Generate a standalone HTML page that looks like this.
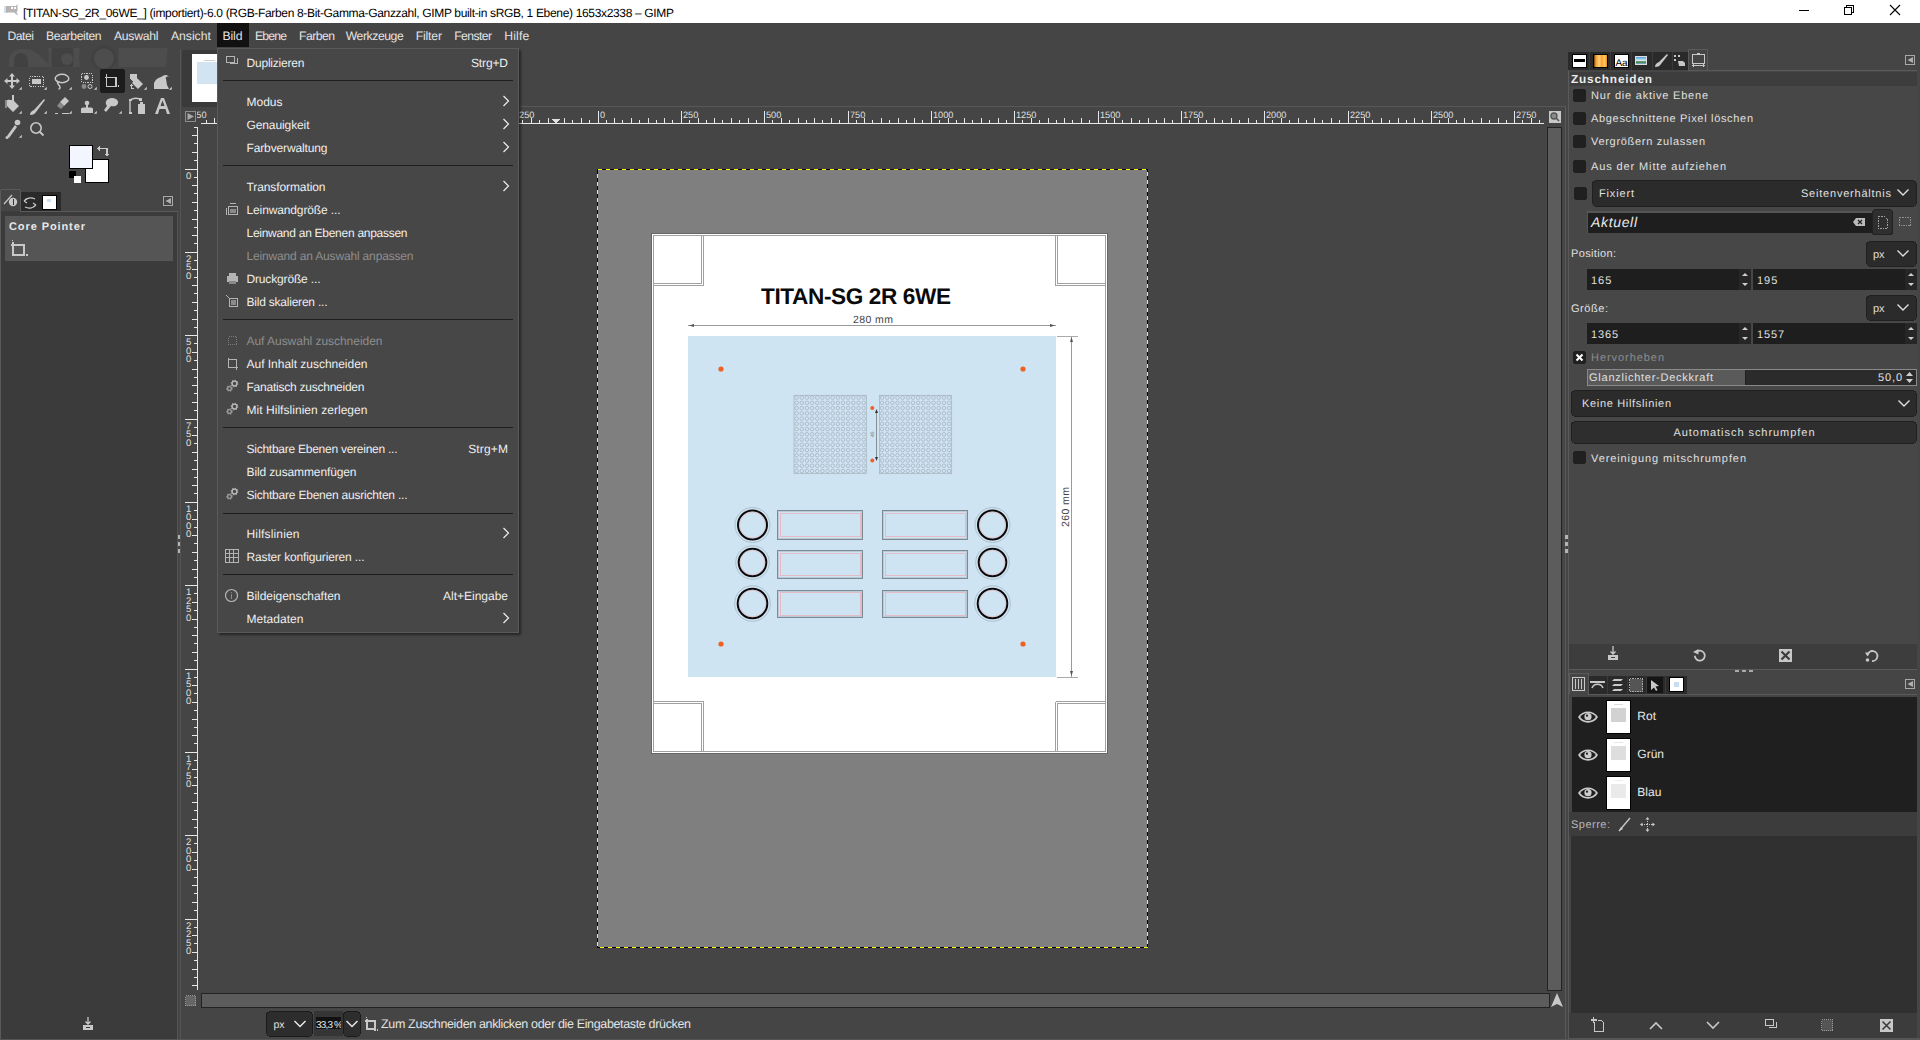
<!DOCTYPE html>
<html><head><meta charset="utf-8"><title>GIMP</title>
<style>
html,body{margin:0;padding:0;width:1920px;height:1040px;overflow:hidden;background:#454545;font-family:"Liberation Sans",sans-serif;}
svg{display:block;position:absolute;left:0;top:0;}
text{white-space:pre;}
</style></head><body>
<svg width="1920" height="1040" viewBox="0 0 1920 1040" shape-rendering="crispEdges" text-rendering="geometricPrecision">
<rect x="0" y="0" width="1920" height="1040" fill="#454545" />
<rect x="0" y="0" width="1920" height="23" fill="#ffffff" />
<rect x="4" y="6" width="4" height="7" fill="#cfe0ee" />
<path d="M6 6 H16 L17.5 4 V11 L16.5 12.5 L18 14.5 L17 15 L14 12.5 H6 Z" fill="#b4b4b4" shape-rendering="geometricPrecision"/>
<rect x="11" y="7" width="2" height="2" fill="#ffffff" />
<rect x="14" y="7" width="2" height="2" fill="#ffffff" />
<rect x="7" y="8" width="3" height="1" fill="#d8a0a0" />
<text x="23" y="17" font-size="12" fill="#000000" font-family="Liberation Sans" textLength="651" lengthAdjust="spacing" >[TITAN-SG_2R_06WE_] (importiert)-6.0 (RGB-Farben 8-Bit-Gamma-Ganzzahl, GIMP built-in sRGB, 1 Ebene) 1653x2338 – GIMP</text>
<line x1="1799" y1="10.5" x2="1809" y2="10.5" stroke="#000" stroke-width="1" />
<rect x="1844.5" y="7.5" width="7" height="7" fill="none" stroke="#000" stroke-width="1"/>
<path d="M1846.5 7.5 V5.5 H1853.5 V12.5 H1851.5" fill="none" stroke="#000" stroke-width="1"/>
<path d="M1890 5 L1900 15 M1900 5 L1890 15" stroke="#000" stroke-width="1.1" shape-rendering="geometricPrecision"/>
<rect x="0" y="23" width="1920" height="24" fill="#454545" />
<rect x="217" y="23" width="32" height="24" fill="#111111" />
<text x="7.4" y="40" font-size="12.2" fill="#e3e3e3" font-family="Liberation Sans" textLength="26.5" lengthAdjust="spacing" >Datei</text>
<text x="46" y="40" font-size="12.2" fill="#e3e3e3" font-family="Liberation Sans" textLength="55.6" lengthAdjust="spacing" >Bearbeiten</text>
<text x="114" y="40" font-size="12.2" fill="#e3e3e3" font-family="Liberation Sans" textLength="44.4" lengthAdjust="spacing" >Auswahl</text>
<text x="171" y="40" font-size="12.2" fill="#e3e3e3" font-family="Liberation Sans" textLength="39.8" lengthAdjust="spacing" >Ansicht</text>
<text x="222.5" y="40" font-size="12.2" fill="#e3e3e3" font-family="Liberation Sans" textLength="20" lengthAdjust="spacing" >Bild</text>
<text x="255" y="40" font-size="12.2" fill="#e3e3e3" font-family="Liberation Sans" textLength="32" lengthAdjust="spacing" >Ebene</text>
<text x="299" y="40" font-size="12.2" fill="#e3e3e3" font-family="Liberation Sans" textLength="36" lengthAdjust="spacing" >Farben</text>
<text x="345.75" y="40" font-size="12.2" fill="#e3e3e3" font-family="Liberation Sans" textLength="58" lengthAdjust="spacing" >Werkzeuge</text>
<text x="415.75" y="40" font-size="12.2" fill="#e3e3e3" font-family="Liberation Sans" textLength="26.25" lengthAdjust="spacing" >Filter</text>
<text x="454.25" y="40" font-size="12.2" fill="#e3e3e3" font-family="Liberation Sans" textLength="37.75" lengthAdjust="spacing" >Fenster</text>
<text x="504.25" y="40" font-size="12.2" fill="#e3e3e3" font-family="Liberation Sans" textLength="25" lengthAdjust="spacing" >Hilfe</text>
<rect x="0" y="47" width="178" height="993" fill="#454545" />
<line x1="0.5" y1="190" x2="0.5" y2="1040" stroke="#5a5a5a" stroke-width="1" />
<rect x="1" y="211" width="176" height="829" fill="#3b3b3b" />
<line x1="177.5" y1="211" x2="177.5" y2="1040" stroke="#555555" stroke-width="1" />
<line x1="180.5" y1="49" x2="180.5" y2="1040" stroke="#555555" stroke-width="1" />
<line x1="181" y1="49.5" x2="232" y2="49.5" stroke="#555555" stroke-width="1" />
<rect x="181" y="49" width="1387" height="991" fill="#454545" />
<rect x="182" y="50" width="50" height="57" fill="#3a3a3a" />
<rect x="192" y="54" width="34" height="48" fill="#ffffff" />
<rect x="197" y="62" width="25" height="22" fill="#d2e4f2" />
<rect x="204" y="60" width="11" height="1" fill="#d0d0d0" />
<rect x="1568" y="47" width="352" height="993" fill="#454545" />
<line x1="1565.5" y1="106" x2="1565.5" y2="1040" stroke="#5a5a5a" stroke-width="1" />
<line x1="1568.5" y1="70" x2="1568.5" y2="1040" stroke="#5a5a5a" stroke-width="1" />
<rect x="198" y="124" width="1349" height="866" fill="#454545" />
<line x1="232" y1="106.5" x2="1565" y2="106.5" stroke="#575757" stroke-width="1" />
<defs><clipPath id="trc"><rect x="197" y="107" width="1347" height="17"/></clipPath></defs>
<g clip-path="url(#trc)">
<line x1="201" y1="123.5" x2="1544" y2="123.5" stroke="#e8e8e8" stroke-width="1" />
<line x1="206.5" y1="120" x2="206.5" y2="123" stroke="#e8e8e8" stroke-width="1" />
<line x1="214.5" y1="118" x2="214.5" y2="123" stroke="#e8e8e8" stroke-width="1" />
<line x1="222.5" y1="120" x2="222.5" y2="123" stroke="#e8e8e8" stroke-width="1" />
<line x1="231.5" y1="118" x2="231.5" y2="123" stroke="#e8e8e8" stroke-width="1" />
<line x1="239.5" y1="120" x2="239.5" y2="123" stroke="#e8e8e8" stroke-width="1" />
<line x1="248.5" y1="118" x2="248.5" y2="123" stroke="#e8e8e8" stroke-width="1" />
<line x1="256.5" y1="120" x2="256.5" y2="123" stroke="#e8e8e8" stroke-width="1" />
<line x1="264.5" y1="111" x2="264.5" y2="123" stroke="#e8e8e8" stroke-width="1" />
<line x1="272.5" y1="120" x2="272.5" y2="123" stroke="#e8e8e8" stroke-width="1" />
<line x1="281.5" y1="118" x2="281.5" y2="123" stroke="#e8e8e8" stroke-width="1" />
<line x1="289.5" y1="120" x2="289.5" y2="123" stroke="#e8e8e8" stroke-width="1" />
<line x1="298.5" y1="118" x2="298.5" y2="123" stroke="#e8e8e8" stroke-width="1" />
<line x1="306.5" y1="120" x2="306.5" y2="123" stroke="#e8e8e8" stroke-width="1" />
<line x1="314.5" y1="118" x2="314.5" y2="123" stroke="#e8e8e8" stroke-width="1" />
<line x1="322.5" y1="120" x2="322.5" y2="123" stroke="#e8e8e8" stroke-width="1" />
<line x1="331.5" y1="118" x2="331.5" y2="123" stroke="#e8e8e8" stroke-width="1" />
<line x1="339.5" y1="120" x2="339.5" y2="123" stroke="#e8e8e8" stroke-width="1" />
<line x1="348.5" y1="111" x2="348.5" y2="123" stroke="#e8e8e8" stroke-width="1" />
<line x1="356.5" y1="120" x2="356.5" y2="123" stroke="#e8e8e8" stroke-width="1" />
<line x1="364.5" y1="118" x2="364.5" y2="123" stroke="#e8e8e8" stroke-width="1" />
<line x1="372.5" y1="120" x2="372.5" y2="123" stroke="#e8e8e8" stroke-width="1" />
<line x1="381.5" y1="118" x2="381.5" y2="123" stroke="#e8e8e8" stroke-width="1" />
<line x1="389.5" y1="120" x2="389.5" y2="123" stroke="#e8e8e8" stroke-width="1" />
<line x1="398.5" y1="118" x2="398.5" y2="123" stroke="#e8e8e8" stroke-width="1" />
<line x1="406.5" y1="120" x2="406.5" y2="123" stroke="#e8e8e8" stroke-width="1" />
<line x1="414.5" y1="118" x2="414.5" y2="123" stroke="#e8e8e8" stroke-width="1" />
<line x1="422.5" y1="120" x2="422.5" y2="123" stroke="#e8e8e8" stroke-width="1" />
<line x1="431.5" y1="111" x2="431.5" y2="123" stroke="#e8e8e8" stroke-width="1" />
<line x1="439.5" y1="120" x2="439.5" y2="123" stroke="#e8e8e8" stroke-width="1" />
<line x1="448.5" y1="118" x2="448.5" y2="123" stroke="#e8e8e8" stroke-width="1" />
<line x1="456.5" y1="120" x2="456.5" y2="123" stroke="#e8e8e8" stroke-width="1" />
<line x1="464.5" y1="118" x2="464.5" y2="123" stroke="#e8e8e8" stroke-width="1" />
<line x1="472.5" y1="120" x2="472.5" y2="123" stroke="#e8e8e8" stroke-width="1" />
<line x1="481.5" y1="118" x2="481.5" y2="123" stroke="#e8e8e8" stroke-width="1" />
<line x1="489.5" y1="120" x2="489.5" y2="123" stroke="#e8e8e8" stroke-width="1" />
<line x1="498.5" y1="118" x2="498.5" y2="123" stroke="#e8e8e8" stroke-width="1" />
<line x1="506.5" y1="120" x2="506.5" y2="123" stroke="#e8e8e8" stroke-width="1" />
<line x1="514.5" y1="111" x2="514.5" y2="123" stroke="#e8e8e8" stroke-width="1" />
<line x1="522.5" y1="120" x2="522.5" y2="123" stroke="#e8e8e8" stroke-width="1" />
<line x1="531.5" y1="118" x2="531.5" y2="123" stroke="#e8e8e8" stroke-width="1" />
<line x1="539.5" y1="120" x2="539.5" y2="123" stroke="#e8e8e8" stroke-width="1" />
<line x1="548.5" y1="118" x2="548.5" y2="123" stroke="#e8e8e8" stroke-width="1" />
<line x1="556.5" y1="120" x2="556.5" y2="123" stroke="#e8e8e8" stroke-width="1" />
<line x1="564.5" y1="118" x2="564.5" y2="123" stroke="#e8e8e8" stroke-width="1" />
<line x1="572.5" y1="120" x2="572.5" y2="123" stroke="#e8e8e8" stroke-width="1" />
<line x1="581.5" y1="118" x2="581.5" y2="123" stroke="#e8e8e8" stroke-width="1" />
<line x1="589.5" y1="120" x2="589.5" y2="123" stroke="#e8e8e8" stroke-width="1" />
<line x1="598.5" y1="111" x2="598.5" y2="123" stroke="#e8e8e8" stroke-width="1" />
<line x1="606.5" y1="120" x2="606.5" y2="123" stroke="#e8e8e8" stroke-width="1" />
<line x1="614.5" y1="118" x2="614.5" y2="123" stroke="#e8e8e8" stroke-width="1" />
<line x1="622.5" y1="120" x2="622.5" y2="123" stroke="#e8e8e8" stroke-width="1" />
<line x1="631.5" y1="118" x2="631.5" y2="123" stroke="#e8e8e8" stroke-width="1" />
<line x1="639.5" y1="120" x2="639.5" y2="123" stroke="#e8e8e8" stroke-width="1" />
<line x1="648.5" y1="118" x2="648.5" y2="123" stroke="#e8e8e8" stroke-width="1" />
<line x1="656.5" y1="120" x2="656.5" y2="123" stroke="#e8e8e8" stroke-width="1" />
<line x1="664.5" y1="118" x2="664.5" y2="123" stroke="#e8e8e8" stroke-width="1" />
<line x1="672.5" y1="120" x2="672.5" y2="123" stroke="#e8e8e8" stroke-width="1" />
<line x1="681.5" y1="111" x2="681.5" y2="123" stroke="#e8e8e8" stroke-width="1" />
<line x1="689.5" y1="120" x2="689.5" y2="123" stroke="#e8e8e8" stroke-width="1" />
<line x1="698.5" y1="118" x2="698.5" y2="123" stroke="#e8e8e8" stroke-width="1" />
<line x1="706.5" y1="120" x2="706.5" y2="123" stroke="#e8e8e8" stroke-width="1" />
<line x1="714.5" y1="118" x2="714.5" y2="123" stroke="#e8e8e8" stroke-width="1" />
<line x1="722.5" y1="120" x2="722.5" y2="123" stroke="#e8e8e8" stroke-width="1" />
<line x1="731.5" y1="118" x2="731.5" y2="123" stroke="#e8e8e8" stroke-width="1" />
<line x1="739.5" y1="120" x2="739.5" y2="123" stroke="#e8e8e8" stroke-width="1" />
<line x1="748.5" y1="118" x2="748.5" y2="123" stroke="#e8e8e8" stroke-width="1" />
<line x1="756.5" y1="120" x2="756.5" y2="123" stroke="#e8e8e8" stroke-width="1" />
<line x1="764.5" y1="111" x2="764.5" y2="123" stroke="#e8e8e8" stroke-width="1" />
<line x1="772.5" y1="120" x2="772.5" y2="123" stroke="#e8e8e8" stroke-width="1" />
<line x1="781.5" y1="118" x2="781.5" y2="123" stroke="#e8e8e8" stroke-width="1" />
<line x1="789.5" y1="120" x2="789.5" y2="123" stroke="#e8e8e8" stroke-width="1" />
<line x1="798.5" y1="118" x2="798.5" y2="123" stroke="#e8e8e8" stroke-width="1" />
<line x1="806.5" y1="120" x2="806.5" y2="123" stroke="#e8e8e8" stroke-width="1" />
<line x1="814.5" y1="118" x2="814.5" y2="123" stroke="#e8e8e8" stroke-width="1" />
<line x1="822.5" y1="120" x2="822.5" y2="123" stroke="#e8e8e8" stroke-width="1" />
<line x1="831.5" y1="118" x2="831.5" y2="123" stroke="#e8e8e8" stroke-width="1" />
<line x1="839.5" y1="120" x2="839.5" y2="123" stroke="#e8e8e8" stroke-width="1" />
<line x1="848.5" y1="111" x2="848.5" y2="123" stroke="#e8e8e8" stroke-width="1" />
<line x1="856.5" y1="120" x2="856.5" y2="123" stroke="#e8e8e8" stroke-width="1" />
<line x1="864.5" y1="118" x2="864.5" y2="123" stroke="#e8e8e8" stroke-width="1" />
<line x1="872.5" y1="120" x2="872.5" y2="123" stroke="#e8e8e8" stroke-width="1" />
<line x1="881.5" y1="118" x2="881.5" y2="123" stroke="#e8e8e8" stroke-width="1" />
<line x1="889.5" y1="120" x2="889.5" y2="123" stroke="#e8e8e8" stroke-width="1" />
<line x1="898.5" y1="118" x2="898.5" y2="123" stroke="#e8e8e8" stroke-width="1" />
<line x1="906.5" y1="120" x2="906.5" y2="123" stroke="#e8e8e8" stroke-width="1" />
<line x1="914.5" y1="118" x2="914.5" y2="123" stroke="#e8e8e8" stroke-width="1" />
<line x1="922.5" y1="120" x2="922.5" y2="123" stroke="#e8e8e8" stroke-width="1" />
<line x1="931.5" y1="111" x2="931.5" y2="123" stroke="#e8e8e8" stroke-width="1" />
<line x1="939.5" y1="120" x2="939.5" y2="123" stroke="#e8e8e8" stroke-width="1" />
<line x1="948.5" y1="118" x2="948.5" y2="123" stroke="#e8e8e8" stroke-width="1" />
<line x1="956.5" y1="120" x2="956.5" y2="123" stroke="#e8e8e8" stroke-width="1" />
<line x1="964.5" y1="118" x2="964.5" y2="123" stroke="#e8e8e8" stroke-width="1" />
<line x1="972.5" y1="120" x2="972.5" y2="123" stroke="#e8e8e8" stroke-width="1" />
<line x1="981.5" y1="118" x2="981.5" y2="123" stroke="#e8e8e8" stroke-width="1" />
<line x1="989.5" y1="120" x2="989.5" y2="123" stroke="#e8e8e8" stroke-width="1" />
<line x1="998.5" y1="118" x2="998.5" y2="123" stroke="#e8e8e8" stroke-width="1" />
<line x1="1006.5" y1="120" x2="1006.5" y2="123" stroke="#e8e8e8" stroke-width="1" />
<line x1="1014.5" y1="111" x2="1014.5" y2="123" stroke="#e8e8e8" stroke-width="1" />
<line x1="1022.5" y1="120" x2="1022.5" y2="123" stroke="#e8e8e8" stroke-width="1" />
<line x1="1031.5" y1="118" x2="1031.5" y2="123" stroke="#e8e8e8" stroke-width="1" />
<line x1="1039.5" y1="120" x2="1039.5" y2="123" stroke="#e8e8e8" stroke-width="1" />
<line x1="1048.5" y1="118" x2="1048.5" y2="123" stroke="#e8e8e8" stroke-width="1" />
<line x1="1056.5" y1="120" x2="1056.5" y2="123" stroke="#e8e8e8" stroke-width="1" />
<line x1="1064.5" y1="118" x2="1064.5" y2="123" stroke="#e8e8e8" stroke-width="1" />
<line x1="1072.5" y1="120" x2="1072.5" y2="123" stroke="#e8e8e8" stroke-width="1" />
<line x1="1081.5" y1="118" x2="1081.5" y2="123" stroke="#e8e8e8" stroke-width="1" />
<line x1="1089.5" y1="120" x2="1089.5" y2="123" stroke="#e8e8e8" stroke-width="1" />
<line x1="1098.5" y1="111" x2="1098.5" y2="123" stroke="#e8e8e8" stroke-width="1" />
<line x1="1106.5" y1="120" x2="1106.5" y2="123" stroke="#e8e8e8" stroke-width="1" />
<line x1="1114.5" y1="118" x2="1114.5" y2="123" stroke="#e8e8e8" stroke-width="1" />
<line x1="1122.5" y1="120" x2="1122.5" y2="123" stroke="#e8e8e8" stroke-width="1" />
<line x1="1131.5" y1="118" x2="1131.5" y2="123" stroke="#e8e8e8" stroke-width="1" />
<line x1="1139.5" y1="120" x2="1139.5" y2="123" stroke="#e8e8e8" stroke-width="1" />
<line x1="1148.5" y1="118" x2="1148.5" y2="123" stroke="#e8e8e8" stroke-width="1" />
<line x1="1156.5" y1="120" x2="1156.5" y2="123" stroke="#e8e8e8" stroke-width="1" />
<line x1="1164.5" y1="118" x2="1164.5" y2="123" stroke="#e8e8e8" stroke-width="1" />
<line x1="1172.5" y1="120" x2="1172.5" y2="123" stroke="#e8e8e8" stroke-width="1" />
<line x1="1181.5" y1="111" x2="1181.5" y2="123" stroke="#e8e8e8" stroke-width="1" />
<line x1="1189.5" y1="120" x2="1189.5" y2="123" stroke="#e8e8e8" stroke-width="1" />
<line x1="1198.5" y1="118" x2="1198.5" y2="123" stroke="#e8e8e8" stroke-width="1" />
<line x1="1206.5" y1="120" x2="1206.5" y2="123" stroke="#e8e8e8" stroke-width="1" />
<line x1="1214.5" y1="118" x2="1214.5" y2="123" stroke="#e8e8e8" stroke-width="1" />
<line x1="1222.5" y1="120" x2="1222.5" y2="123" stroke="#e8e8e8" stroke-width="1" />
<line x1="1231.5" y1="118" x2="1231.5" y2="123" stroke="#e8e8e8" stroke-width="1" />
<line x1="1239.5" y1="120" x2="1239.5" y2="123" stroke="#e8e8e8" stroke-width="1" />
<line x1="1248.5" y1="118" x2="1248.5" y2="123" stroke="#e8e8e8" stroke-width="1" />
<line x1="1256.5" y1="120" x2="1256.5" y2="123" stroke="#e8e8e8" stroke-width="1" />
<line x1="1264.5" y1="111" x2="1264.5" y2="123" stroke="#e8e8e8" stroke-width="1" />
<line x1="1272.5" y1="120" x2="1272.5" y2="123" stroke="#e8e8e8" stroke-width="1" />
<line x1="1281.5" y1="118" x2="1281.5" y2="123" stroke="#e8e8e8" stroke-width="1" />
<line x1="1289.5" y1="120" x2="1289.5" y2="123" stroke="#e8e8e8" stroke-width="1" />
<line x1="1298.5" y1="118" x2="1298.5" y2="123" stroke="#e8e8e8" stroke-width="1" />
<line x1="1306.5" y1="120" x2="1306.5" y2="123" stroke="#e8e8e8" stroke-width="1" />
<line x1="1314.5" y1="118" x2="1314.5" y2="123" stroke="#e8e8e8" stroke-width="1" />
<line x1="1322.5" y1="120" x2="1322.5" y2="123" stroke="#e8e8e8" stroke-width="1" />
<line x1="1331.5" y1="118" x2="1331.5" y2="123" stroke="#e8e8e8" stroke-width="1" />
<line x1="1339.5" y1="120" x2="1339.5" y2="123" stroke="#e8e8e8" stroke-width="1" />
<line x1="1348.5" y1="111" x2="1348.5" y2="123" stroke="#e8e8e8" stroke-width="1" />
<line x1="1356.5" y1="120" x2="1356.5" y2="123" stroke="#e8e8e8" stroke-width="1" />
<line x1="1364.5" y1="118" x2="1364.5" y2="123" stroke="#e8e8e8" stroke-width="1" />
<line x1="1372.5" y1="120" x2="1372.5" y2="123" stroke="#e8e8e8" stroke-width="1" />
<line x1="1381.5" y1="118" x2="1381.5" y2="123" stroke="#e8e8e8" stroke-width="1" />
<line x1="1389.5" y1="120" x2="1389.5" y2="123" stroke="#e8e8e8" stroke-width="1" />
<line x1="1398.5" y1="118" x2="1398.5" y2="123" stroke="#e8e8e8" stroke-width="1" />
<line x1="1406.5" y1="120" x2="1406.5" y2="123" stroke="#e8e8e8" stroke-width="1" />
<line x1="1414.5" y1="118" x2="1414.5" y2="123" stroke="#e8e8e8" stroke-width="1" />
<line x1="1422.5" y1="120" x2="1422.5" y2="123" stroke="#e8e8e8" stroke-width="1" />
<line x1="1431.5" y1="111" x2="1431.5" y2="123" stroke="#e8e8e8" stroke-width="1" />
<line x1="1439.5" y1="120" x2="1439.5" y2="123" stroke="#e8e8e8" stroke-width="1" />
<line x1="1448.5" y1="118" x2="1448.5" y2="123" stroke="#e8e8e8" stroke-width="1" />
<line x1="1456.5" y1="120" x2="1456.5" y2="123" stroke="#e8e8e8" stroke-width="1" />
<line x1="1464.5" y1="118" x2="1464.5" y2="123" stroke="#e8e8e8" stroke-width="1" />
<line x1="1472.5" y1="120" x2="1472.5" y2="123" stroke="#e8e8e8" stroke-width="1" />
<line x1="1481.5" y1="118" x2="1481.5" y2="123" stroke="#e8e8e8" stroke-width="1" />
<line x1="1489.5" y1="120" x2="1489.5" y2="123" stroke="#e8e8e8" stroke-width="1" />
<line x1="1498.5" y1="118" x2="1498.5" y2="123" stroke="#e8e8e8" stroke-width="1" />
<line x1="1506.5" y1="120" x2="1506.5" y2="123" stroke="#e8e8e8" stroke-width="1" />
<line x1="1514.5" y1="111" x2="1514.5" y2="123" stroke="#e8e8e8" stroke-width="1" />
<line x1="1522.5" y1="120" x2="1522.5" y2="123" stroke="#e8e8e8" stroke-width="1" />
<line x1="1531.5" y1="118" x2="1531.5" y2="123" stroke="#e8e8e8" stroke-width="1" />
<line x1="1539.5" y1="120" x2="1539.5" y2="123" stroke="#e8e8e8" stroke-width="1" />
<text x="183" y="118.3" font-size="9.2" fill="#e0e0e0" font-family="Liberation Sans" >-1250</text>
<text x="266" y="118.3" font-size="9.2" fill="#e0e0e0" font-family="Liberation Sans" >-1000</text>
<text x="350" y="118.3" font-size="9.2" fill="#e0e0e0" font-family="Liberation Sans" >-750</text>
<text x="433" y="118.3" font-size="9.2" fill="#e0e0e0" font-family="Liberation Sans" >-500</text>
<text x="516" y="118.3" font-size="9.2" fill="#e0e0e0" font-family="Liberation Sans" >-250</text>
<text x="600" y="118.3" font-size="9.2" fill="#e0e0e0" font-family="Liberation Sans" >0</text>
<text x="683" y="118.3" font-size="9.2" fill="#e0e0e0" font-family="Liberation Sans" >250</text>
<text x="766" y="118.3" font-size="9.2" fill="#e0e0e0" font-family="Liberation Sans" >500</text>
<text x="850" y="118.3" font-size="9.2" fill="#e0e0e0" font-family="Liberation Sans" >750</text>
<text x="933" y="118.3" font-size="9.2" fill="#e0e0e0" font-family="Liberation Sans" >1000</text>
<text x="1016" y="118.3" font-size="9.2" fill="#e0e0e0" font-family="Liberation Sans" >1250</text>
<text x="1100" y="118.3" font-size="9.2" fill="#e0e0e0" font-family="Liberation Sans" >1500</text>
<text x="1183" y="118.3" font-size="9.2" fill="#e0e0e0" font-family="Liberation Sans" >1750</text>
<text x="1266" y="118.3" font-size="9.2" fill="#e0e0e0" font-family="Liberation Sans" >2000</text>
<text x="1350" y="118.3" font-size="9.2" fill="#e0e0e0" font-family="Liberation Sans" >2250</text>
<text x="1433" y="118.3" font-size="9.2" fill="#e0e0e0" font-family="Liberation Sans" >2500</text>
<text x="1516" y="118.3" font-size="9.2" fill="#e0e0e0" font-family="Liberation Sans" >2750</text>
</g>
<rect x="182" y="108" width="15" height="16" fill="#454545" />
<rect x="185.5" y="111.5" width="10" height="10" fill="none" stroke="#8c8c8c" stroke-width="1"/>
<path d="M187.5 113 L194 116.5 L187.5 120 Z" fill="#a8a8a8" shape-rendering="geometricPrecision"/>
<line x1="197.5" y1="127" x2="197.5" y2="990" stroke="#e8e8e8" stroke-width="1" />
<line x1="194" y1="127.5" x2="197" y2="127.5" stroke="#e8e8e8" stroke-width="1" />
<line x1="192" y1="135.5" x2="197" y2="135.5" stroke="#e8e8e8" stroke-width="1" />
<line x1="194" y1="143.5" x2="197" y2="143.5" stroke="#e8e8e8" stroke-width="1" />
<line x1="192" y1="152.5" x2="197" y2="152.5" stroke="#e8e8e8" stroke-width="1" />
<line x1="194" y1="160.5" x2="197" y2="160.5" stroke="#e8e8e8" stroke-width="1" />
<line x1="185" y1="169.5" x2="197" y2="169.5" stroke="#e8e8e8" stroke-width="1" />
<line x1="194" y1="177.5" x2="197" y2="177.5" stroke="#e8e8e8" stroke-width="1" />
<line x1="192" y1="185.5" x2="197" y2="185.5" stroke="#e8e8e8" stroke-width="1" />
<line x1="194" y1="193.5" x2="197" y2="193.5" stroke="#e8e8e8" stroke-width="1" />
<line x1="192" y1="202.5" x2="197" y2="202.5" stroke="#e8e8e8" stroke-width="1" />
<line x1="194" y1="210.5" x2="197" y2="210.5" stroke="#e8e8e8" stroke-width="1" />
<line x1="192" y1="219.5" x2="197" y2="219.5" stroke="#e8e8e8" stroke-width="1" />
<line x1="194" y1="227.5" x2="197" y2="227.5" stroke="#e8e8e8" stroke-width="1" />
<line x1="192" y1="235.5" x2="197" y2="235.5" stroke="#e8e8e8" stroke-width="1" />
<line x1="194" y1="243.5" x2="197" y2="243.5" stroke="#e8e8e8" stroke-width="1" />
<line x1="185" y1="252.5" x2="197" y2="252.5" stroke="#e8e8e8" stroke-width="1" />
<line x1="194" y1="260.5" x2="197" y2="260.5" stroke="#e8e8e8" stroke-width="1" />
<line x1="192" y1="269.5" x2="197" y2="269.5" stroke="#e8e8e8" stroke-width="1" />
<line x1="194" y1="277.5" x2="197" y2="277.5" stroke="#e8e8e8" stroke-width="1" />
<line x1="192" y1="285.5" x2="197" y2="285.5" stroke="#e8e8e8" stroke-width="1" />
<line x1="194" y1="293.5" x2="197" y2="293.5" stroke="#e8e8e8" stroke-width="1" />
<line x1="192" y1="302.5" x2="197" y2="302.5" stroke="#e8e8e8" stroke-width="1" />
<line x1="194" y1="310.5" x2="197" y2="310.5" stroke="#e8e8e8" stroke-width="1" />
<line x1="192" y1="319.5" x2="197" y2="319.5" stroke="#e8e8e8" stroke-width="1" />
<line x1="194" y1="327.5" x2="197" y2="327.5" stroke="#e8e8e8" stroke-width="1" />
<line x1="185" y1="335.5" x2="197" y2="335.5" stroke="#e8e8e8" stroke-width="1" />
<line x1="194" y1="343.5" x2="197" y2="343.5" stroke="#e8e8e8" stroke-width="1" />
<line x1="192" y1="352.5" x2="197" y2="352.5" stroke="#e8e8e8" stroke-width="1" />
<line x1="194" y1="360.5" x2="197" y2="360.5" stroke="#e8e8e8" stroke-width="1" />
<line x1="192" y1="369.5" x2="197" y2="369.5" stroke="#e8e8e8" stroke-width="1" />
<line x1="194" y1="377.5" x2="197" y2="377.5" stroke="#e8e8e8" stroke-width="1" />
<line x1="192" y1="385.5" x2="197" y2="385.5" stroke="#e8e8e8" stroke-width="1" />
<line x1="194" y1="393.5" x2="197" y2="393.5" stroke="#e8e8e8" stroke-width="1" />
<line x1="192" y1="402.5" x2="197" y2="402.5" stroke="#e8e8e8" stroke-width="1" />
<line x1="194" y1="410.5" x2="197" y2="410.5" stroke="#e8e8e8" stroke-width="1" />
<line x1="185" y1="419.5" x2="197" y2="419.5" stroke="#e8e8e8" stroke-width="1" />
<line x1="194" y1="427.5" x2="197" y2="427.5" stroke="#e8e8e8" stroke-width="1" />
<line x1="192" y1="435.5" x2="197" y2="435.5" stroke="#e8e8e8" stroke-width="1" />
<line x1="194" y1="443.5" x2="197" y2="443.5" stroke="#e8e8e8" stroke-width="1" />
<line x1="192" y1="452.5" x2="197" y2="452.5" stroke="#e8e8e8" stroke-width="1" />
<line x1="194" y1="460.5" x2="197" y2="460.5" stroke="#e8e8e8" stroke-width="1" />
<line x1="192" y1="469.5" x2="197" y2="469.5" stroke="#e8e8e8" stroke-width="1" />
<line x1="194" y1="477.5" x2="197" y2="477.5" stroke="#e8e8e8" stroke-width="1" />
<line x1="192" y1="485.5" x2="197" y2="485.5" stroke="#e8e8e8" stroke-width="1" />
<line x1="194" y1="493.5" x2="197" y2="493.5" stroke="#e8e8e8" stroke-width="1" />
<line x1="185" y1="502.5" x2="197" y2="502.5" stroke="#e8e8e8" stroke-width="1" />
<line x1="194" y1="510.5" x2="197" y2="510.5" stroke="#e8e8e8" stroke-width="1" />
<line x1="192" y1="519.5" x2="197" y2="519.5" stroke="#e8e8e8" stroke-width="1" />
<line x1="194" y1="527.5" x2="197" y2="527.5" stroke="#e8e8e8" stroke-width="1" />
<line x1="192" y1="535.5" x2="197" y2="535.5" stroke="#e8e8e8" stroke-width="1" />
<line x1="194" y1="543.5" x2="197" y2="543.5" stroke="#e8e8e8" stroke-width="1" />
<line x1="192" y1="552.5" x2="197" y2="552.5" stroke="#e8e8e8" stroke-width="1" />
<line x1="194" y1="560.5" x2="197" y2="560.5" stroke="#e8e8e8" stroke-width="1" />
<line x1="192" y1="569.5" x2="197" y2="569.5" stroke="#e8e8e8" stroke-width="1" />
<line x1="194" y1="577.5" x2="197" y2="577.5" stroke="#e8e8e8" stroke-width="1" />
<line x1="185" y1="585.5" x2="197" y2="585.5" stroke="#e8e8e8" stroke-width="1" />
<line x1="194" y1="593.5" x2="197" y2="593.5" stroke="#e8e8e8" stroke-width="1" />
<line x1="192" y1="602.5" x2="197" y2="602.5" stroke="#e8e8e8" stroke-width="1" />
<line x1="194" y1="610.5" x2="197" y2="610.5" stroke="#e8e8e8" stroke-width="1" />
<line x1="192" y1="619.5" x2="197" y2="619.5" stroke="#e8e8e8" stroke-width="1" />
<line x1="194" y1="627.5" x2="197" y2="627.5" stroke="#e8e8e8" stroke-width="1" />
<line x1="192" y1="635.5" x2="197" y2="635.5" stroke="#e8e8e8" stroke-width="1" />
<line x1="194" y1="643.5" x2="197" y2="643.5" stroke="#e8e8e8" stroke-width="1" />
<line x1="192" y1="652.5" x2="197" y2="652.5" stroke="#e8e8e8" stroke-width="1" />
<line x1="194" y1="660.5" x2="197" y2="660.5" stroke="#e8e8e8" stroke-width="1" />
<line x1="185" y1="669.5" x2="197" y2="669.5" stroke="#e8e8e8" stroke-width="1" />
<line x1="194" y1="677.5" x2="197" y2="677.5" stroke="#e8e8e8" stroke-width="1" />
<line x1="192" y1="685.5" x2="197" y2="685.5" stroke="#e8e8e8" stroke-width="1" />
<line x1="194" y1="693.5" x2="197" y2="693.5" stroke="#e8e8e8" stroke-width="1" />
<line x1="192" y1="702.5" x2="197" y2="702.5" stroke="#e8e8e8" stroke-width="1" />
<line x1="194" y1="710.5" x2="197" y2="710.5" stroke="#e8e8e8" stroke-width="1" />
<line x1="192" y1="719.5" x2="197" y2="719.5" stroke="#e8e8e8" stroke-width="1" />
<line x1="194" y1="727.5" x2="197" y2="727.5" stroke="#e8e8e8" stroke-width="1" />
<line x1="192" y1="735.5" x2="197" y2="735.5" stroke="#e8e8e8" stroke-width="1" />
<line x1="194" y1="743.5" x2="197" y2="743.5" stroke="#e8e8e8" stroke-width="1" />
<line x1="185" y1="752.5" x2="197" y2="752.5" stroke="#e8e8e8" stroke-width="1" />
<line x1="194" y1="760.5" x2="197" y2="760.5" stroke="#e8e8e8" stroke-width="1" />
<line x1="192" y1="769.5" x2="197" y2="769.5" stroke="#e8e8e8" stroke-width="1" />
<line x1="194" y1="777.5" x2="197" y2="777.5" stroke="#e8e8e8" stroke-width="1" />
<line x1="192" y1="785.5" x2="197" y2="785.5" stroke="#e8e8e8" stroke-width="1" />
<line x1="194" y1="793.5" x2="197" y2="793.5" stroke="#e8e8e8" stroke-width="1" />
<line x1="192" y1="802.5" x2="197" y2="802.5" stroke="#e8e8e8" stroke-width="1" />
<line x1="194" y1="810.5" x2="197" y2="810.5" stroke="#e8e8e8" stroke-width="1" />
<line x1="192" y1="819.5" x2="197" y2="819.5" stroke="#e8e8e8" stroke-width="1" />
<line x1="194" y1="827.5" x2="197" y2="827.5" stroke="#e8e8e8" stroke-width="1" />
<line x1="185" y1="835.5" x2="197" y2="835.5" stroke="#e8e8e8" stroke-width="1" />
<line x1="194" y1="843.5" x2="197" y2="843.5" stroke="#e8e8e8" stroke-width="1" />
<line x1="192" y1="852.5" x2="197" y2="852.5" stroke="#e8e8e8" stroke-width="1" />
<line x1="194" y1="860.5" x2="197" y2="860.5" stroke="#e8e8e8" stroke-width="1" />
<line x1="192" y1="869.5" x2="197" y2="869.5" stroke="#e8e8e8" stroke-width="1" />
<line x1="194" y1="877.5" x2="197" y2="877.5" stroke="#e8e8e8" stroke-width="1" />
<line x1="192" y1="885.5" x2="197" y2="885.5" stroke="#e8e8e8" stroke-width="1" />
<line x1="194" y1="893.5" x2="197" y2="893.5" stroke="#e8e8e8" stroke-width="1" />
<line x1="192" y1="902.5" x2="197" y2="902.5" stroke="#e8e8e8" stroke-width="1" />
<line x1="194" y1="910.5" x2="197" y2="910.5" stroke="#e8e8e8" stroke-width="1" />
<line x1="185" y1="919.5" x2="197" y2="919.5" stroke="#e8e8e8" stroke-width="1" />
<line x1="194" y1="927.5" x2="197" y2="927.5" stroke="#e8e8e8" stroke-width="1" />
<line x1="192" y1="935.5" x2="197" y2="935.5" stroke="#e8e8e8" stroke-width="1" />
<line x1="194" y1="943.5" x2="197" y2="943.5" stroke="#e8e8e8" stroke-width="1" />
<line x1="192" y1="952.5" x2="197" y2="952.5" stroke="#e8e8e8" stroke-width="1" />
<line x1="194" y1="960.5" x2="197" y2="960.5" stroke="#e8e8e8" stroke-width="1" />
<line x1="192" y1="969.5" x2="197" y2="969.5" stroke="#e8e8e8" stroke-width="1" />
<line x1="194" y1="977.5" x2="197" y2="977.5" stroke="#e8e8e8" stroke-width="1" />
<line x1="192" y1="985.5" x2="197" y2="985.5" stroke="#e8e8e8" stroke-width="1" />
<text x="186" y="178.5" font-size="9.5" fill="#e0e0e0" font-family="Liberation Sans" >0</text>
<text x="186" y="261.8333333333333" font-size="9.5" fill="#e0e0e0" font-family="Liberation Sans" >2</text>
<text x="186" y="270.3333333333333" font-size="9.5" fill="#e0e0e0" font-family="Liberation Sans" >5</text>
<text x="186" y="278.8333333333333" font-size="9.5" fill="#e0e0e0" font-family="Liberation Sans" >0</text>
<text x="186" y="345.16666666666663" font-size="9.5" fill="#e0e0e0" font-family="Liberation Sans" >5</text>
<text x="186" y="353.66666666666663" font-size="9.5" fill="#e0e0e0" font-family="Liberation Sans" >0</text>
<text x="186" y="362.16666666666663" font-size="9.5" fill="#e0e0e0" font-family="Liberation Sans" >0</text>
<text x="186" y="428.5" font-size="9.5" fill="#e0e0e0" font-family="Liberation Sans" >7</text>
<text x="186" y="437.0" font-size="9.5" fill="#e0e0e0" font-family="Liberation Sans" >5</text>
<text x="186" y="445.5" font-size="9.5" fill="#e0e0e0" font-family="Liberation Sans" >0</text>
<text x="186" y="511.8333333333333" font-size="9.5" fill="#e0e0e0" font-family="Liberation Sans" >1</text>
<text x="186" y="520.3333333333333" font-size="9.5" fill="#e0e0e0" font-family="Liberation Sans" >0</text>
<text x="186" y="528.8333333333333" font-size="9.5" fill="#e0e0e0" font-family="Liberation Sans" >0</text>
<text x="186" y="537.3333333333333" font-size="9.5" fill="#e0e0e0" font-family="Liberation Sans" >0</text>
<text x="186" y="595.1666666666667" font-size="9.5" fill="#e0e0e0" font-family="Liberation Sans" >1</text>
<text x="186" y="603.6666666666667" font-size="9.5" fill="#e0e0e0" font-family="Liberation Sans" >2</text>
<text x="186" y="612.1666666666667" font-size="9.5" fill="#e0e0e0" font-family="Liberation Sans" >5</text>
<text x="186" y="620.6666666666667" font-size="9.5" fill="#e0e0e0" font-family="Liberation Sans" >0</text>
<text x="186" y="678.5" font-size="9.5" fill="#e0e0e0" font-family="Liberation Sans" >1</text>
<text x="186" y="687.0" font-size="9.5" fill="#e0e0e0" font-family="Liberation Sans" >5</text>
<text x="186" y="695.5" font-size="9.5" fill="#e0e0e0" font-family="Liberation Sans" >0</text>
<text x="186" y="704.0" font-size="9.5" fill="#e0e0e0" font-family="Liberation Sans" >0</text>
<text x="186" y="761.8333333333334" font-size="9.5" fill="#e0e0e0" font-family="Liberation Sans" >1</text>
<text x="186" y="770.3333333333334" font-size="9.5" fill="#e0e0e0" font-family="Liberation Sans" >7</text>
<text x="186" y="778.8333333333334" font-size="9.5" fill="#e0e0e0" font-family="Liberation Sans" >5</text>
<text x="186" y="787.3333333333334" font-size="9.5" fill="#e0e0e0" font-family="Liberation Sans" >0</text>
<text x="186" y="845.1666666666666" font-size="9.5" fill="#e0e0e0" font-family="Liberation Sans" >2</text>
<text x="186" y="853.6666666666666" font-size="9.5" fill="#e0e0e0" font-family="Liberation Sans" >0</text>
<text x="186" y="862.1666666666666" font-size="9.5" fill="#e0e0e0" font-family="Liberation Sans" >0</text>
<text x="186" y="870.6666666666666" font-size="9.5" fill="#e0e0e0" font-family="Liberation Sans" >0</text>
<text x="186" y="928.5" font-size="9.5" fill="#e0e0e0" font-family="Liberation Sans" >2</text>
<text x="186" y="937.0" font-size="9.5" fill="#e0e0e0" font-family="Liberation Sans" >2</text>
<text x="186" y="945.5" font-size="9.5" fill="#e0e0e0" font-family="Liberation Sans" >5</text>
<text x="186" y="954.0" font-size="9.5" fill="#e0e0e0" font-family="Liberation Sans" >0</text>
<path d="M551 119 L560 119 L555.5 123.5 Z" fill="#e0e0e0" />
<rect x="1549" y="111" width="12" height="12" fill="#c8c8c8" />
<circle cx="1554" cy="116" r="3" fill="#8a8a8a" stroke="#555" stroke-width="1.3" shape-rendering="geometricPrecision"/>
<line x1="1556" y1="118" x2="1559" y2="121" stroke="#555" stroke-width="1.6" shape-rendering="geometricPrecision"/>
<rect x="1547" y="127" width="15" height="864" fill="#222222" />
<rect x="1548" y="128" width="13" height="862" fill="#5c5c5c" />
<rect x="201" y="993" width="1349" height="15" fill="#222222" />
<rect x="202" y="994" width="1347" height="13" fill="#5c5c5c" />
<rect x="185.5" y="995.5" width="10" height="10" fill="#666" stroke="#999" stroke-width="1" stroke-dasharray="1 1"/>
<path d="M1557 993 L1563 1007 L1557 1004 L1551 1007 Z" fill="#c8c8c8" shape-rendering="geometricPrecision"/>
<rect x="597" y="169" width="551" height="779" fill="#7f7f7f" />
<rect x="597.5" y="169.5" width="550" height="778" fill="none" stroke="#000" stroke-width="1"/>
<rect x="597.5" y="169.5" width="550" height="778" fill="none" stroke="#ffff00" stroke-width="1" stroke-dasharray="4 4"/>
<rect x="652" y="234" width="455" height="519" fill="#ffffff" />
<rect x="651.5" y="233.5" width="456" height="520" fill="none" stroke="#666666" stroke-width="1"/>
<rect x="653.5" y="235.5" width="452" height="516" fill="none" stroke="#a0a0a0" stroke-width="1"/>
<rect x="653.5" y="235.5" width="48" height="48" fill="none" stroke="#a0a0a0" stroke-width="1"/>
<line x1="703.5" y1="235.5" x2="703.5" y2="285.5" stroke="#a0a0a0" stroke-width="1" />
<line x1="653.5" y1="285.5" x2="703.5" y2="285.5" stroke="#a0a0a0" stroke-width="1" />
<rect x="1057.5" y="235.5" width="48" height="48" fill="none" stroke="#a0a0a0" stroke-width="1"/>
<line x1="1055.5" y1="235.5" x2="1055.5" y2="285.5" stroke="#a0a0a0" stroke-width="1" />
<line x1="1055.5" y1="285.5" x2="1105.5" y2="285.5" stroke="#a0a0a0" stroke-width="1" />
<rect x="653.5" y="703.5" width="48" height="48" fill="none" stroke="#a0a0a0" stroke-width="1"/>
<line x1="703.5" y1="701.5" x2="703.5" y2="751.5" stroke="#a0a0a0" stroke-width="1" />
<line x1="653.5" y1="701.5" x2="703.5" y2="701.5" stroke="#a0a0a0" stroke-width="1" />
<rect x="1057.5" y="703.5" width="48" height="48" fill="none" stroke="#a0a0a0" stroke-width="1"/>
<line x1="1055.5" y1="701.5" x2="1055.5" y2="751.5" stroke="#a0a0a0" stroke-width="1" />
<line x1="1055.5" y1="701.5" x2="1105.5" y2="701.5" stroke="#a0a0a0" stroke-width="1" />
<text x="761" y="304" font-size="22.6" fill="#0a0a0a" font-family="Liberation Sans" font-weight="bold" textLength="190" lengthAdjust="spacing" >TITAN-SG 2R 6WE</text>
<text x="853" y="323" font-size="10.5" fill="#444444" font-family="Liberation Sans" textLength="40" lengthAdjust="spacing" >280 mm</text>
<line x1="688" y1="325.5" x2="1056" y2="325.5" stroke="#9a9a9a" stroke-width="1" />
<path d="M689 325.5 L694 324 L694 327 Z" fill="#555" shape-rendering="geometricPrecision"/>
<path d="M1055 325.5 L1050 324 L1050 327 Z" fill="#555" shape-rendering="geometricPrecision"/>
<rect x="688" y="336" width="368" height="341" fill="#cfe4f3" />
<line x1="1071.5" y1="337" x2="1071.5" y2="677" stroke="#9a9a9a" stroke-width="1" />
<line x1="1057" y1="336.5" x2="1078" y2="336.5" stroke="#aaaaaa" stroke-width="1" />
<line x1="1057" y1="677.5" x2="1078" y2="677.5" stroke="#aaaaaa" stroke-width="1" />
<path d="M1071.5 337 L1070 342 L1073 342 Z" fill="#555" shape-rendering="geometricPrecision"/>
<path d="M1071.5 676 L1070 671 L1073 671 Z" fill="#555" shape-rendering="geometricPrecision"/>
<text x="0" y="0" font-size="10.5" fill="#444" font-family="Liberation Sans" transform="translate(1068.5,527) rotate(-90)" textLength="40" lengthAdjust="spacing">260 mm</text>
<circle cx="721" cy="369" r="2.6" fill="#f06020" shape-rendering="geometricPrecision"/>
<circle cx="1023" cy="369" r="2.6" fill="#f06020" shape-rendering="geometricPrecision"/>
<circle cx="721" cy="644" r="2.6" fill="#f06020" shape-rendering="geometricPrecision"/>
<circle cx="1023" cy="644" r="2.6" fill="#f06020" shape-rendering="geometricPrecision"/>
<path d="M798.40 397.62a1.8 1.8 0 1 0 -3.6 0a1.8 1.8 0 1 0 3.6 0M798.40 402.86a1.8 1.8 0 1 0 -3.6 0a1.8 1.8 0 1 0 3.6 0M798.40 408.10a1.8 1.8 0 1 0 -3.6 0a1.8 1.8 0 1 0 3.6 0M798.40 413.34a1.8 1.8 0 1 0 -3.6 0a1.8 1.8 0 1 0 3.6 0M798.40 418.58a1.8 1.8 0 1 0 -3.6 0a1.8 1.8 0 1 0 3.6 0M798.40 423.82a1.8 1.8 0 1 0 -3.6 0a1.8 1.8 0 1 0 3.6 0M798.40 429.06a1.8 1.8 0 1 0 -3.6 0a1.8 1.8 0 1 0 3.6 0M798.40 434.30a1.8 1.8 0 1 0 -3.6 0a1.8 1.8 0 1 0 3.6 0M798.40 439.54a1.8 1.8 0 1 0 -3.6 0a1.8 1.8 0 1 0 3.6 0M798.40 444.78a1.8 1.8 0 1 0 -3.6 0a1.8 1.8 0 1 0 3.6 0M798.40 450.02a1.8 1.8 0 1 0 -3.6 0a1.8 1.8 0 1 0 3.6 0M798.40 455.26a1.8 1.8 0 1 0 -3.6 0a1.8 1.8 0 1 0 3.6 0M798.40 460.50a1.8 1.8 0 1 0 -3.6 0a1.8 1.8 0 1 0 3.6 0M798.40 465.74a1.8 1.8 0 1 0 -3.6 0a1.8 1.8 0 1 0 3.6 0M798.40 470.98a1.8 1.8 0 1 0 -3.6 0a1.8 1.8 0 1 0 3.6 0M803.56 397.62a1.8 1.8 0 1 0 -3.6 0a1.8 1.8 0 1 0 3.6 0M803.56 402.86a1.8 1.8 0 1 0 -3.6 0a1.8 1.8 0 1 0 3.6 0M803.56 408.10a1.8 1.8 0 1 0 -3.6 0a1.8 1.8 0 1 0 3.6 0M803.56 413.34a1.8 1.8 0 1 0 -3.6 0a1.8 1.8 0 1 0 3.6 0M803.56 418.58a1.8 1.8 0 1 0 -3.6 0a1.8 1.8 0 1 0 3.6 0M803.56 423.82a1.8 1.8 0 1 0 -3.6 0a1.8 1.8 0 1 0 3.6 0M803.56 429.06a1.8 1.8 0 1 0 -3.6 0a1.8 1.8 0 1 0 3.6 0M803.56 434.30a1.8 1.8 0 1 0 -3.6 0a1.8 1.8 0 1 0 3.6 0M803.56 439.54a1.8 1.8 0 1 0 -3.6 0a1.8 1.8 0 1 0 3.6 0M803.56 444.78a1.8 1.8 0 1 0 -3.6 0a1.8 1.8 0 1 0 3.6 0M803.56 450.02a1.8 1.8 0 1 0 -3.6 0a1.8 1.8 0 1 0 3.6 0M803.56 455.26a1.8 1.8 0 1 0 -3.6 0a1.8 1.8 0 1 0 3.6 0M803.56 460.50a1.8 1.8 0 1 0 -3.6 0a1.8 1.8 0 1 0 3.6 0M803.56 465.74a1.8 1.8 0 1 0 -3.6 0a1.8 1.8 0 1 0 3.6 0M803.56 470.98a1.8 1.8 0 1 0 -3.6 0a1.8 1.8 0 1 0 3.6 0M808.72 397.62a1.8 1.8 0 1 0 -3.6 0a1.8 1.8 0 1 0 3.6 0M808.72 402.86a1.8 1.8 0 1 0 -3.6 0a1.8 1.8 0 1 0 3.6 0M808.72 408.10a1.8 1.8 0 1 0 -3.6 0a1.8 1.8 0 1 0 3.6 0M808.72 413.34a1.8 1.8 0 1 0 -3.6 0a1.8 1.8 0 1 0 3.6 0M808.72 418.58a1.8 1.8 0 1 0 -3.6 0a1.8 1.8 0 1 0 3.6 0M808.72 423.82a1.8 1.8 0 1 0 -3.6 0a1.8 1.8 0 1 0 3.6 0M808.72 429.06a1.8 1.8 0 1 0 -3.6 0a1.8 1.8 0 1 0 3.6 0M808.72 434.30a1.8 1.8 0 1 0 -3.6 0a1.8 1.8 0 1 0 3.6 0M808.72 439.54a1.8 1.8 0 1 0 -3.6 0a1.8 1.8 0 1 0 3.6 0M808.72 444.78a1.8 1.8 0 1 0 -3.6 0a1.8 1.8 0 1 0 3.6 0M808.72 450.02a1.8 1.8 0 1 0 -3.6 0a1.8 1.8 0 1 0 3.6 0M808.72 455.26a1.8 1.8 0 1 0 -3.6 0a1.8 1.8 0 1 0 3.6 0M808.72 460.50a1.8 1.8 0 1 0 -3.6 0a1.8 1.8 0 1 0 3.6 0M808.72 465.74a1.8 1.8 0 1 0 -3.6 0a1.8 1.8 0 1 0 3.6 0M808.72 470.98a1.8 1.8 0 1 0 -3.6 0a1.8 1.8 0 1 0 3.6 0M813.88 397.62a1.8 1.8 0 1 0 -3.6 0a1.8 1.8 0 1 0 3.6 0M813.88 402.86a1.8 1.8 0 1 0 -3.6 0a1.8 1.8 0 1 0 3.6 0M813.88 408.10a1.8 1.8 0 1 0 -3.6 0a1.8 1.8 0 1 0 3.6 0M813.88 413.34a1.8 1.8 0 1 0 -3.6 0a1.8 1.8 0 1 0 3.6 0M813.88 418.58a1.8 1.8 0 1 0 -3.6 0a1.8 1.8 0 1 0 3.6 0M813.88 423.82a1.8 1.8 0 1 0 -3.6 0a1.8 1.8 0 1 0 3.6 0M813.88 429.06a1.8 1.8 0 1 0 -3.6 0a1.8 1.8 0 1 0 3.6 0M813.88 434.30a1.8 1.8 0 1 0 -3.6 0a1.8 1.8 0 1 0 3.6 0M813.88 439.54a1.8 1.8 0 1 0 -3.6 0a1.8 1.8 0 1 0 3.6 0M813.88 444.78a1.8 1.8 0 1 0 -3.6 0a1.8 1.8 0 1 0 3.6 0M813.88 450.02a1.8 1.8 0 1 0 -3.6 0a1.8 1.8 0 1 0 3.6 0M813.88 455.26a1.8 1.8 0 1 0 -3.6 0a1.8 1.8 0 1 0 3.6 0M813.88 460.50a1.8 1.8 0 1 0 -3.6 0a1.8 1.8 0 1 0 3.6 0M813.88 465.74a1.8 1.8 0 1 0 -3.6 0a1.8 1.8 0 1 0 3.6 0M813.88 470.98a1.8 1.8 0 1 0 -3.6 0a1.8 1.8 0 1 0 3.6 0M819.04 397.62a1.8 1.8 0 1 0 -3.6 0a1.8 1.8 0 1 0 3.6 0M819.04 402.86a1.8 1.8 0 1 0 -3.6 0a1.8 1.8 0 1 0 3.6 0M819.04 408.10a1.8 1.8 0 1 0 -3.6 0a1.8 1.8 0 1 0 3.6 0M819.04 413.34a1.8 1.8 0 1 0 -3.6 0a1.8 1.8 0 1 0 3.6 0M819.04 418.58a1.8 1.8 0 1 0 -3.6 0a1.8 1.8 0 1 0 3.6 0M819.04 423.82a1.8 1.8 0 1 0 -3.6 0a1.8 1.8 0 1 0 3.6 0M819.04 429.06a1.8 1.8 0 1 0 -3.6 0a1.8 1.8 0 1 0 3.6 0M819.04 434.30a1.8 1.8 0 1 0 -3.6 0a1.8 1.8 0 1 0 3.6 0M819.04 439.54a1.8 1.8 0 1 0 -3.6 0a1.8 1.8 0 1 0 3.6 0M819.04 444.78a1.8 1.8 0 1 0 -3.6 0a1.8 1.8 0 1 0 3.6 0M819.04 450.02a1.8 1.8 0 1 0 -3.6 0a1.8 1.8 0 1 0 3.6 0M819.04 455.26a1.8 1.8 0 1 0 -3.6 0a1.8 1.8 0 1 0 3.6 0M819.04 460.50a1.8 1.8 0 1 0 -3.6 0a1.8 1.8 0 1 0 3.6 0M819.04 465.74a1.8 1.8 0 1 0 -3.6 0a1.8 1.8 0 1 0 3.6 0M819.04 470.98a1.8 1.8 0 1 0 -3.6 0a1.8 1.8 0 1 0 3.6 0M824.20 397.62a1.8 1.8 0 1 0 -3.6 0a1.8 1.8 0 1 0 3.6 0M824.20 402.86a1.8 1.8 0 1 0 -3.6 0a1.8 1.8 0 1 0 3.6 0M824.20 408.10a1.8 1.8 0 1 0 -3.6 0a1.8 1.8 0 1 0 3.6 0M824.20 413.34a1.8 1.8 0 1 0 -3.6 0a1.8 1.8 0 1 0 3.6 0M824.20 418.58a1.8 1.8 0 1 0 -3.6 0a1.8 1.8 0 1 0 3.6 0M824.20 423.82a1.8 1.8 0 1 0 -3.6 0a1.8 1.8 0 1 0 3.6 0M824.20 429.06a1.8 1.8 0 1 0 -3.6 0a1.8 1.8 0 1 0 3.6 0M824.20 434.30a1.8 1.8 0 1 0 -3.6 0a1.8 1.8 0 1 0 3.6 0M824.20 439.54a1.8 1.8 0 1 0 -3.6 0a1.8 1.8 0 1 0 3.6 0M824.20 444.78a1.8 1.8 0 1 0 -3.6 0a1.8 1.8 0 1 0 3.6 0M824.20 450.02a1.8 1.8 0 1 0 -3.6 0a1.8 1.8 0 1 0 3.6 0M824.20 455.26a1.8 1.8 0 1 0 -3.6 0a1.8 1.8 0 1 0 3.6 0M824.20 460.50a1.8 1.8 0 1 0 -3.6 0a1.8 1.8 0 1 0 3.6 0M824.20 465.74a1.8 1.8 0 1 0 -3.6 0a1.8 1.8 0 1 0 3.6 0M824.20 470.98a1.8 1.8 0 1 0 -3.6 0a1.8 1.8 0 1 0 3.6 0M829.36 397.62a1.8 1.8 0 1 0 -3.6 0a1.8 1.8 0 1 0 3.6 0M829.36 402.86a1.8 1.8 0 1 0 -3.6 0a1.8 1.8 0 1 0 3.6 0M829.36 408.10a1.8 1.8 0 1 0 -3.6 0a1.8 1.8 0 1 0 3.6 0M829.36 413.34a1.8 1.8 0 1 0 -3.6 0a1.8 1.8 0 1 0 3.6 0M829.36 418.58a1.8 1.8 0 1 0 -3.6 0a1.8 1.8 0 1 0 3.6 0M829.36 423.82a1.8 1.8 0 1 0 -3.6 0a1.8 1.8 0 1 0 3.6 0M829.36 429.06a1.8 1.8 0 1 0 -3.6 0a1.8 1.8 0 1 0 3.6 0M829.36 434.30a1.8 1.8 0 1 0 -3.6 0a1.8 1.8 0 1 0 3.6 0M829.36 439.54a1.8 1.8 0 1 0 -3.6 0a1.8 1.8 0 1 0 3.6 0M829.36 444.78a1.8 1.8 0 1 0 -3.6 0a1.8 1.8 0 1 0 3.6 0M829.36 450.02a1.8 1.8 0 1 0 -3.6 0a1.8 1.8 0 1 0 3.6 0M829.36 455.26a1.8 1.8 0 1 0 -3.6 0a1.8 1.8 0 1 0 3.6 0M829.36 460.50a1.8 1.8 0 1 0 -3.6 0a1.8 1.8 0 1 0 3.6 0M829.36 465.74a1.8 1.8 0 1 0 -3.6 0a1.8 1.8 0 1 0 3.6 0M829.36 470.98a1.8 1.8 0 1 0 -3.6 0a1.8 1.8 0 1 0 3.6 0M834.52 397.62a1.8 1.8 0 1 0 -3.6 0a1.8 1.8 0 1 0 3.6 0M834.52 402.86a1.8 1.8 0 1 0 -3.6 0a1.8 1.8 0 1 0 3.6 0M834.52 408.10a1.8 1.8 0 1 0 -3.6 0a1.8 1.8 0 1 0 3.6 0M834.52 413.34a1.8 1.8 0 1 0 -3.6 0a1.8 1.8 0 1 0 3.6 0M834.52 418.58a1.8 1.8 0 1 0 -3.6 0a1.8 1.8 0 1 0 3.6 0M834.52 423.82a1.8 1.8 0 1 0 -3.6 0a1.8 1.8 0 1 0 3.6 0M834.52 429.06a1.8 1.8 0 1 0 -3.6 0a1.8 1.8 0 1 0 3.6 0M834.52 434.30a1.8 1.8 0 1 0 -3.6 0a1.8 1.8 0 1 0 3.6 0M834.52 439.54a1.8 1.8 0 1 0 -3.6 0a1.8 1.8 0 1 0 3.6 0M834.52 444.78a1.8 1.8 0 1 0 -3.6 0a1.8 1.8 0 1 0 3.6 0M834.52 450.02a1.8 1.8 0 1 0 -3.6 0a1.8 1.8 0 1 0 3.6 0M834.52 455.26a1.8 1.8 0 1 0 -3.6 0a1.8 1.8 0 1 0 3.6 0M834.52 460.50a1.8 1.8 0 1 0 -3.6 0a1.8 1.8 0 1 0 3.6 0M834.52 465.74a1.8 1.8 0 1 0 -3.6 0a1.8 1.8 0 1 0 3.6 0M834.52 470.98a1.8 1.8 0 1 0 -3.6 0a1.8 1.8 0 1 0 3.6 0M839.68 397.62a1.8 1.8 0 1 0 -3.6 0a1.8 1.8 0 1 0 3.6 0M839.68 402.86a1.8 1.8 0 1 0 -3.6 0a1.8 1.8 0 1 0 3.6 0M839.68 408.10a1.8 1.8 0 1 0 -3.6 0a1.8 1.8 0 1 0 3.6 0M839.68 413.34a1.8 1.8 0 1 0 -3.6 0a1.8 1.8 0 1 0 3.6 0M839.68 418.58a1.8 1.8 0 1 0 -3.6 0a1.8 1.8 0 1 0 3.6 0M839.68 423.82a1.8 1.8 0 1 0 -3.6 0a1.8 1.8 0 1 0 3.6 0M839.68 429.06a1.8 1.8 0 1 0 -3.6 0a1.8 1.8 0 1 0 3.6 0M839.68 434.30a1.8 1.8 0 1 0 -3.6 0a1.8 1.8 0 1 0 3.6 0M839.68 439.54a1.8 1.8 0 1 0 -3.6 0a1.8 1.8 0 1 0 3.6 0M839.68 444.78a1.8 1.8 0 1 0 -3.6 0a1.8 1.8 0 1 0 3.6 0M839.68 450.02a1.8 1.8 0 1 0 -3.6 0a1.8 1.8 0 1 0 3.6 0M839.68 455.26a1.8 1.8 0 1 0 -3.6 0a1.8 1.8 0 1 0 3.6 0M839.68 460.50a1.8 1.8 0 1 0 -3.6 0a1.8 1.8 0 1 0 3.6 0M839.68 465.74a1.8 1.8 0 1 0 -3.6 0a1.8 1.8 0 1 0 3.6 0M839.68 470.98a1.8 1.8 0 1 0 -3.6 0a1.8 1.8 0 1 0 3.6 0M844.84 397.62a1.8 1.8 0 1 0 -3.6 0a1.8 1.8 0 1 0 3.6 0M844.84 402.86a1.8 1.8 0 1 0 -3.6 0a1.8 1.8 0 1 0 3.6 0M844.84 408.10a1.8 1.8 0 1 0 -3.6 0a1.8 1.8 0 1 0 3.6 0M844.84 413.34a1.8 1.8 0 1 0 -3.6 0a1.8 1.8 0 1 0 3.6 0M844.84 418.58a1.8 1.8 0 1 0 -3.6 0a1.8 1.8 0 1 0 3.6 0M844.84 423.82a1.8 1.8 0 1 0 -3.6 0a1.8 1.8 0 1 0 3.6 0M844.84 429.06a1.8 1.8 0 1 0 -3.6 0a1.8 1.8 0 1 0 3.6 0M844.84 434.30a1.8 1.8 0 1 0 -3.6 0a1.8 1.8 0 1 0 3.6 0M844.84 439.54a1.8 1.8 0 1 0 -3.6 0a1.8 1.8 0 1 0 3.6 0M844.84 444.78a1.8 1.8 0 1 0 -3.6 0a1.8 1.8 0 1 0 3.6 0M844.84 450.02a1.8 1.8 0 1 0 -3.6 0a1.8 1.8 0 1 0 3.6 0M844.84 455.26a1.8 1.8 0 1 0 -3.6 0a1.8 1.8 0 1 0 3.6 0M844.84 460.50a1.8 1.8 0 1 0 -3.6 0a1.8 1.8 0 1 0 3.6 0M844.84 465.74a1.8 1.8 0 1 0 -3.6 0a1.8 1.8 0 1 0 3.6 0M844.84 470.98a1.8 1.8 0 1 0 -3.6 0a1.8 1.8 0 1 0 3.6 0M850.00 397.62a1.8 1.8 0 1 0 -3.6 0a1.8 1.8 0 1 0 3.6 0M850.00 402.86a1.8 1.8 0 1 0 -3.6 0a1.8 1.8 0 1 0 3.6 0M850.00 408.10a1.8 1.8 0 1 0 -3.6 0a1.8 1.8 0 1 0 3.6 0M850.00 413.34a1.8 1.8 0 1 0 -3.6 0a1.8 1.8 0 1 0 3.6 0M850.00 418.58a1.8 1.8 0 1 0 -3.6 0a1.8 1.8 0 1 0 3.6 0M850.00 423.82a1.8 1.8 0 1 0 -3.6 0a1.8 1.8 0 1 0 3.6 0M850.00 429.06a1.8 1.8 0 1 0 -3.6 0a1.8 1.8 0 1 0 3.6 0M850.00 434.30a1.8 1.8 0 1 0 -3.6 0a1.8 1.8 0 1 0 3.6 0M850.00 439.54a1.8 1.8 0 1 0 -3.6 0a1.8 1.8 0 1 0 3.6 0M850.00 444.78a1.8 1.8 0 1 0 -3.6 0a1.8 1.8 0 1 0 3.6 0M850.00 450.02a1.8 1.8 0 1 0 -3.6 0a1.8 1.8 0 1 0 3.6 0M850.00 455.26a1.8 1.8 0 1 0 -3.6 0a1.8 1.8 0 1 0 3.6 0M850.00 460.50a1.8 1.8 0 1 0 -3.6 0a1.8 1.8 0 1 0 3.6 0M850.00 465.74a1.8 1.8 0 1 0 -3.6 0a1.8 1.8 0 1 0 3.6 0M850.00 470.98a1.8 1.8 0 1 0 -3.6 0a1.8 1.8 0 1 0 3.6 0M855.16 397.62a1.8 1.8 0 1 0 -3.6 0a1.8 1.8 0 1 0 3.6 0M855.16 402.86a1.8 1.8 0 1 0 -3.6 0a1.8 1.8 0 1 0 3.6 0M855.16 408.10a1.8 1.8 0 1 0 -3.6 0a1.8 1.8 0 1 0 3.6 0M855.16 413.34a1.8 1.8 0 1 0 -3.6 0a1.8 1.8 0 1 0 3.6 0M855.16 418.58a1.8 1.8 0 1 0 -3.6 0a1.8 1.8 0 1 0 3.6 0M855.16 423.82a1.8 1.8 0 1 0 -3.6 0a1.8 1.8 0 1 0 3.6 0M855.16 429.06a1.8 1.8 0 1 0 -3.6 0a1.8 1.8 0 1 0 3.6 0M855.16 434.30a1.8 1.8 0 1 0 -3.6 0a1.8 1.8 0 1 0 3.6 0M855.16 439.54a1.8 1.8 0 1 0 -3.6 0a1.8 1.8 0 1 0 3.6 0M855.16 444.78a1.8 1.8 0 1 0 -3.6 0a1.8 1.8 0 1 0 3.6 0M855.16 450.02a1.8 1.8 0 1 0 -3.6 0a1.8 1.8 0 1 0 3.6 0M855.16 455.26a1.8 1.8 0 1 0 -3.6 0a1.8 1.8 0 1 0 3.6 0M855.16 460.50a1.8 1.8 0 1 0 -3.6 0a1.8 1.8 0 1 0 3.6 0M855.16 465.74a1.8 1.8 0 1 0 -3.6 0a1.8 1.8 0 1 0 3.6 0M855.16 470.98a1.8 1.8 0 1 0 -3.6 0a1.8 1.8 0 1 0 3.6 0M860.32 397.62a1.8 1.8 0 1 0 -3.6 0a1.8 1.8 0 1 0 3.6 0M860.32 402.86a1.8 1.8 0 1 0 -3.6 0a1.8 1.8 0 1 0 3.6 0M860.32 408.10a1.8 1.8 0 1 0 -3.6 0a1.8 1.8 0 1 0 3.6 0M860.32 413.34a1.8 1.8 0 1 0 -3.6 0a1.8 1.8 0 1 0 3.6 0M860.32 418.58a1.8 1.8 0 1 0 -3.6 0a1.8 1.8 0 1 0 3.6 0M860.32 423.82a1.8 1.8 0 1 0 -3.6 0a1.8 1.8 0 1 0 3.6 0M860.32 429.06a1.8 1.8 0 1 0 -3.6 0a1.8 1.8 0 1 0 3.6 0M860.32 434.30a1.8 1.8 0 1 0 -3.6 0a1.8 1.8 0 1 0 3.6 0M860.32 439.54a1.8 1.8 0 1 0 -3.6 0a1.8 1.8 0 1 0 3.6 0M860.32 444.78a1.8 1.8 0 1 0 -3.6 0a1.8 1.8 0 1 0 3.6 0M860.32 450.02a1.8 1.8 0 1 0 -3.6 0a1.8 1.8 0 1 0 3.6 0M860.32 455.26a1.8 1.8 0 1 0 -3.6 0a1.8 1.8 0 1 0 3.6 0M860.32 460.50a1.8 1.8 0 1 0 -3.6 0a1.8 1.8 0 1 0 3.6 0M860.32 465.74a1.8 1.8 0 1 0 -3.6 0a1.8 1.8 0 1 0 3.6 0M860.32 470.98a1.8 1.8 0 1 0 -3.6 0a1.8 1.8 0 1 0 3.6 0M865.48 397.62a1.8 1.8 0 1 0 -3.6 0a1.8 1.8 0 1 0 3.6 0M865.48 402.86a1.8 1.8 0 1 0 -3.6 0a1.8 1.8 0 1 0 3.6 0M865.48 408.10a1.8 1.8 0 1 0 -3.6 0a1.8 1.8 0 1 0 3.6 0M865.48 413.34a1.8 1.8 0 1 0 -3.6 0a1.8 1.8 0 1 0 3.6 0M865.48 418.58a1.8 1.8 0 1 0 -3.6 0a1.8 1.8 0 1 0 3.6 0M865.48 423.82a1.8 1.8 0 1 0 -3.6 0a1.8 1.8 0 1 0 3.6 0M865.48 429.06a1.8 1.8 0 1 0 -3.6 0a1.8 1.8 0 1 0 3.6 0M865.48 434.30a1.8 1.8 0 1 0 -3.6 0a1.8 1.8 0 1 0 3.6 0M865.48 439.54a1.8 1.8 0 1 0 -3.6 0a1.8 1.8 0 1 0 3.6 0M865.48 444.78a1.8 1.8 0 1 0 -3.6 0a1.8 1.8 0 1 0 3.6 0M865.48 450.02a1.8 1.8 0 1 0 -3.6 0a1.8 1.8 0 1 0 3.6 0M865.48 455.26a1.8 1.8 0 1 0 -3.6 0a1.8 1.8 0 1 0 3.6 0M865.48 460.50a1.8 1.8 0 1 0 -3.6 0a1.8 1.8 0 1 0 3.6 0M865.48 465.74a1.8 1.8 0 1 0 -3.6 0a1.8 1.8 0 1 0 3.6 0M865.48 470.98a1.8 1.8 0 1 0 -3.6 0a1.8 1.8 0 1 0 3.6 0" fill="none" stroke="#98a4ae" stroke-width="0.6" shape-rendering="geometricPrecision"/>
<rect x="794.0" y="395.3" width="72.3" height="78.4" fill="none" stroke="#a4b0ba" stroke-width="0.7" shape-rendering="geometricPrecision"/>
<path d="M883.80 397.62a1.8 1.8 0 1 0 -3.6 0a1.8 1.8 0 1 0 3.6 0M883.80 402.86a1.8 1.8 0 1 0 -3.6 0a1.8 1.8 0 1 0 3.6 0M883.80 408.10a1.8 1.8 0 1 0 -3.6 0a1.8 1.8 0 1 0 3.6 0M883.80 413.34a1.8 1.8 0 1 0 -3.6 0a1.8 1.8 0 1 0 3.6 0M883.80 418.58a1.8 1.8 0 1 0 -3.6 0a1.8 1.8 0 1 0 3.6 0M883.80 423.82a1.8 1.8 0 1 0 -3.6 0a1.8 1.8 0 1 0 3.6 0M883.80 429.06a1.8 1.8 0 1 0 -3.6 0a1.8 1.8 0 1 0 3.6 0M883.80 434.30a1.8 1.8 0 1 0 -3.6 0a1.8 1.8 0 1 0 3.6 0M883.80 439.54a1.8 1.8 0 1 0 -3.6 0a1.8 1.8 0 1 0 3.6 0M883.80 444.78a1.8 1.8 0 1 0 -3.6 0a1.8 1.8 0 1 0 3.6 0M883.80 450.02a1.8 1.8 0 1 0 -3.6 0a1.8 1.8 0 1 0 3.6 0M883.80 455.26a1.8 1.8 0 1 0 -3.6 0a1.8 1.8 0 1 0 3.6 0M883.80 460.50a1.8 1.8 0 1 0 -3.6 0a1.8 1.8 0 1 0 3.6 0M883.80 465.74a1.8 1.8 0 1 0 -3.6 0a1.8 1.8 0 1 0 3.6 0M883.80 470.98a1.8 1.8 0 1 0 -3.6 0a1.8 1.8 0 1 0 3.6 0M888.96 397.62a1.8 1.8 0 1 0 -3.6 0a1.8 1.8 0 1 0 3.6 0M888.96 402.86a1.8 1.8 0 1 0 -3.6 0a1.8 1.8 0 1 0 3.6 0M888.96 408.10a1.8 1.8 0 1 0 -3.6 0a1.8 1.8 0 1 0 3.6 0M888.96 413.34a1.8 1.8 0 1 0 -3.6 0a1.8 1.8 0 1 0 3.6 0M888.96 418.58a1.8 1.8 0 1 0 -3.6 0a1.8 1.8 0 1 0 3.6 0M888.96 423.82a1.8 1.8 0 1 0 -3.6 0a1.8 1.8 0 1 0 3.6 0M888.96 429.06a1.8 1.8 0 1 0 -3.6 0a1.8 1.8 0 1 0 3.6 0M888.96 434.30a1.8 1.8 0 1 0 -3.6 0a1.8 1.8 0 1 0 3.6 0M888.96 439.54a1.8 1.8 0 1 0 -3.6 0a1.8 1.8 0 1 0 3.6 0M888.96 444.78a1.8 1.8 0 1 0 -3.6 0a1.8 1.8 0 1 0 3.6 0M888.96 450.02a1.8 1.8 0 1 0 -3.6 0a1.8 1.8 0 1 0 3.6 0M888.96 455.26a1.8 1.8 0 1 0 -3.6 0a1.8 1.8 0 1 0 3.6 0M888.96 460.50a1.8 1.8 0 1 0 -3.6 0a1.8 1.8 0 1 0 3.6 0M888.96 465.74a1.8 1.8 0 1 0 -3.6 0a1.8 1.8 0 1 0 3.6 0M888.96 470.98a1.8 1.8 0 1 0 -3.6 0a1.8 1.8 0 1 0 3.6 0M894.12 397.62a1.8 1.8 0 1 0 -3.6 0a1.8 1.8 0 1 0 3.6 0M894.12 402.86a1.8 1.8 0 1 0 -3.6 0a1.8 1.8 0 1 0 3.6 0M894.12 408.10a1.8 1.8 0 1 0 -3.6 0a1.8 1.8 0 1 0 3.6 0M894.12 413.34a1.8 1.8 0 1 0 -3.6 0a1.8 1.8 0 1 0 3.6 0M894.12 418.58a1.8 1.8 0 1 0 -3.6 0a1.8 1.8 0 1 0 3.6 0M894.12 423.82a1.8 1.8 0 1 0 -3.6 0a1.8 1.8 0 1 0 3.6 0M894.12 429.06a1.8 1.8 0 1 0 -3.6 0a1.8 1.8 0 1 0 3.6 0M894.12 434.30a1.8 1.8 0 1 0 -3.6 0a1.8 1.8 0 1 0 3.6 0M894.12 439.54a1.8 1.8 0 1 0 -3.6 0a1.8 1.8 0 1 0 3.6 0M894.12 444.78a1.8 1.8 0 1 0 -3.6 0a1.8 1.8 0 1 0 3.6 0M894.12 450.02a1.8 1.8 0 1 0 -3.6 0a1.8 1.8 0 1 0 3.6 0M894.12 455.26a1.8 1.8 0 1 0 -3.6 0a1.8 1.8 0 1 0 3.6 0M894.12 460.50a1.8 1.8 0 1 0 -3.6 0a1.8 1.8 0 1 0 3.6 0M894.12 465.74a1.8 1.8 0 1 0 -3.6 0a1.8 1.8 0 1 0 3.6 0M894.12 470.98a1.8 1.8 0 1 0 -3.6 0a1.8 1.8 0 1 0 3.6 0M899.28 397.62a1.8 1.8 0 1 0 -3.6 0a1.8 1.8 0 1 0 3.6 0M899.28 402.86a1.8 1.8 0 1 0 -3.6 0a1.8 1.8 0 1 0 3.6 0M899.28 408.10a1.8 1.8 0 1 0 -3.6 0a1.8 1.8 0 1 0 3.6 0M899.28 413.34a1.8 1.8 0 1 0 -3.6 0a1.8 1.8 0 1 0 3.6 0M899.28 418.58a1.8 1.8 0 1 0 -3.6 0a1.8 1.8 0 1 0 3.6 0M899.28 423.82a1.8 1.8 0 1 0 -3.6 0a1.8 1.8 0 1 0 3.6 0M899.28 429.06a1.8 1.8 0 1 0 -3.6 0a1.8 1.8 0 1 0 3.6 0M899.28 434.30a1.8 1.8 0 1 0 -3.6 0a1.8 1.8 0 1 0 3.6 0M899.28 439.54a1.8 1.8 0 1 0 -3.6 0a1.8 1.8 0 1 0 3.6 0M899.28 444.78a1.8 1.8 0 1 0 -3.6 0a1.8 1.8 0 1 0 3.6 0M899.28 450.02a1.8 1.8 0 1 0 -3.6 0a1.8 1.8 0 1 0 3.6 0M899.28 455.26a1.8 1.8 0 1 0 -3.6 0a1.8 1.8 0 1 0 3.6 0M899.28 460.50a1.8 1.8 0 1 0 -3.6 0a1.8 1.8 0 1 0 3.6 0M899.28 465.74a1.8 1.8 0 1 0 -3.6 0a1.8 1.8 0 1 0 3.6 0M899.28 470.98a1.8 1.8 0 1 0 -3.6 0a1.8 1.8 0 1 0 3.6 0M904.44 397.62a1.8 1.8 0 1 0 -3.6 0a1.8 1.8 0 1 0 3.6 0M904.44 402.86a1.8 1.8 0 1 0 -3.6 0a1.8 1.8 0 1 0 3.6 0M904.44 408.10a1.8 1.8 0 1 0 -3.6 0a1.8 1.8 0 1 0 3.6 0M904.44 413.34a1.8 1.8 0 1 0 -3.6 0a1.8 1.8 0 1 0 3.6 0M904.44 418.58a1.8 1.8 0 1 0 -3.6 0a1.8 1.8 0 1 0 3.6 0M904.44 423.82a1.8 1.8 0 1 0 -3.6 0a1.8 1.8 0 1 0 3.6 0M904.44 429.06a1.8 1.8 0 1 0 -3.6 0a1.8 1.8 0 1 0 3.6 0M904.44 434.30a1.8 1.8 0 1 0 -3.6 0a1.8 1.8 0 1 0 3.6 0M904.44 439.54a1.8 1.8 0 1 0 -3.6 0a1.8 1.8 0 1 0 3.6 0M904.44 444.78a1.8 1.8 0 1 0 -3.6 0a1.8 1.8 0 1 0 3.6 0M904.44 450.02a1.8 1.8 0 1 0 -3.6 0a1.8 1.8 0 1 0 3.6 0M904.44 455.26a1.8 1.8 0 1 0 -3.6 0a1.8 1.8 0 1 0 3.6 0M904.44 460.50a1.8 1.8 0 1 0 -3.6 0a1.8 1.8 0 1 0 3.6 0M904.44 465.74a1.8 1.8 0 1 0 -3.6 0a1.8 1.8 0 1 0 3.6 0M904.44 470.98a1.8 1.8 0 1 0 -3.6 0a1.8 1.8 0 1 0 3.6 0M909.60 397.62a1.8 1.8 0 1 0 -3.6 0a1.8 1.8 0 1 0 3.6 0M909.60 402.86a1.8 1.8 0 1 0 -3.6 0a1.8 1.8 0 1 0 3.6 0M909.60 408.10a1.8 1.8 0 1 0 -3.6 0a1.8 1.8 0 1 0 3.6 0M909.60 413.34a1.8 1.8 0 1 0 -3.6 0a1.8 1.8 0 1 0 3.6 0M909.60 418.58a1.8 1.8 0 1 0 -3.6 0a1.8 1.8 0 1 0 3.6 0M909.60 423.82a1.8 1.8 0 1 0 -3.6 0a1.8 1.8 0 1 0 3.6 0M909.60 429.06a1.8 1.8 0 1 0 -3.6 0a1.8 1.8 0 1 0 3.6 0M909.60 434.30a1.8 1.8 0 1 0 -3.6 0a1.8 1.8 0 1 0 3.6 0M909.60 439.54a1.8 1.8 0 1 0 -3.6 0a1.8 1.8 0 1 0 3.6 0M909.60 444.78a1.8 1.8 0 1 0 -3.6 0a1.8 1.8 0 1 0 3.6 0M909.60 450.02a1.8 1.8 0 1 0 -3.6 0a1.8 1.8 0 1 0 3.6 0M909.60 455.26a1.8 1.8 0 1 0 -3.6 0a1.8 1.8 0 1 0 3.6 0M909.60 460.50a1.8 1.8 0 1 0 -3.6 0a1.8 1.8 0 1 0 3.6 0M909.60 465.74a1.8 1.8 0 1 0 -3.6 0a1.8 1.8 0 1 0 3.6 0M909.60 470.98a1.8 1.8 0 1 0 -3.6 0a1.8 1.8 0 1 0 3.6 0M914.76 397.62a1.8 1.8 0 1 0 -3.6 0a1.8 1.8 0 1 0 3.6 0M914.76 402.86a1.8 1.8 0 1 0 -3.6 0a1.8 1.8 0 1 0 3.6 0M914.76 408.10a1.8 1.8 0 1 0 -3.6 0a1.8 1.8 0 1 0 3.6 0M914.76 413.34a1.8 1.8 0 1 0 -3.6 0a1.8 1.8 0 1 0 3.6 0M914.76 418.58a1.8 1.8 0 1 0 -3.6 0a1.8 1.8 0 1 0 3.6 0M914.76 423.82a1.8 1.8 0 1 0 -3.6 0a1.8 1.8 0 1 0 3.6 0M914.76 429.06a1.8 1.8 0 1 0 -3.6 0a1.8 1.8 0 1 0 3.6 0M914.76 434.30a1.8 1.8 0 1 0 -3.6 0a1.8 1.8 0 1 0 3.6 0M914.76 439.54a1.8 1.8 0 1 0 -3.6 0a1.8 1.8 0 1 0 3.6 0M914.76 444.78a1.8 1.8 0 1 0 -3.6 0a1.8 1.8 0 1 0 3.6 0M914.76 450.02a1.8 1.8 0 1 0 -3.6 0a1.8 1.8 0 1 0 3.6 0M914.76 455.26a1.8 1.8 0 1 0 -3.6 0a1.8 1.8 0 1 0 3.6 0M914.76 460.50a1.8 1.8 0 1 0 -3.6 0a1.8 1.8 0 1 0 3.6 0M914.76 465.74a1.8 1.8 0 1 0 -3.6 0a1.8 1.8 0 1 0 3.6 0M914.76 470.98a1.8 1.8 0 1 0 -3.6 0a1.8 1.8 0 1 0 3.6 0M919.92 397.62a1.8 1.8 0 1 0 -3.6 0a1.8 1.8 0 1 0 3.6 0M919.92 402.86a1.8 1.8 0 1 0 -3.6 0a1.8 1.8 0 1 0 3.6 0M919.92 408.10a1.8 1.8 0 1 0 -3.6 0a1.8 1.8 0 1 0 3.6 0M919.92 413.34a1.8 1.8 0 1 0 -3.6 0a1.8 1.8 0 1 0 3.6 0M919.92 418.58a1.8 1.8 0 1 0 -3.6 0a1.8 1.8 0 1 0 3.6 0M919.92 423.82a1.8 1.8 0 1 0 -3.6 0a1.8 1.8 0 1 0 3.6 0M919.92 429.06a1.8 1.8 0 1 0 -3.6 0a1.8 1.8 0 1 0 3.6 0M919.92 434.30a1.8 1.8 0 1 0 -3.6 0a1.8 1.8 0 1 0 3.6 0M919.92 439.54a1.8 1.8 0 1 0 -3.6 0a1.8 1.8 0 1 0 3.6 0M919.92 444.78a1.8 1.8 0 1 0 -3.6 0a1.8 1.8 0 1 0 3.6 0M919.92 450.02a1.8 1.8 0 1 0 -3.6 0a1.8 1.8 0 1 0 3.6 0M919.92 455.26a1.8 1.8 0 1 0 -3.6 0a1.8 1.8 0 1 0 3.6 0M919.92 460.50a1.8 1.8 0 1 0 -3.6 0a1.8 1.8 0 1 0 3.6 0M919.92 465.74a1.8 1.8 0 1 0 -3.6 0a1.8 1.8 0 1 0 3.6 0M919.92 470.98a1.8 1.8 0 1 0 -3.6 0a1.8 1.8 0 1 0 3.6 0M925.08 397.62a1.8 1.8 0 1 0 -3.6 0a1.8 1.8 0 1 0 3.6 0M925.08 402.86a1.8 1.8 0 1 0 -3.6 0a1.8 1.8 0 1 0 3.6 0M925.08 408.10a1.8 1.8 0 1 0 -3.6 0a1.8 1.8 0 1 0 3.6 0M925.08 413.34a1.8 1.8 0 1 0 -3.6 0a1.8 1.8 0 1 0 3.6 0M925.08 418.58a1.8 1.8 0 1 0 -3.6 0a1.8 1.8 0 1 0 3.6 0M925.08 423.82a1.8 1.8 0 1 0 -3.6 0a1.8 1.8 0 1 0 3.6 0M925.08 429.06a1.8 1.8 0 1 0 -3.6 0a1.8 1.8 0 1 0 3.6 0M925.08 434.30a1.8 1.8 0 1 0 -3.6 0a1.8 1.8 0 1 0 3.6 0M925.08 439.54a1.8 1.8 0 1 0 -3.6 0a1.8 1.8 0 1 0 3.6 0M925.08 444.78a1.8 1.8 0 1 0 -3.6 0a1.8 1.8 0 1 0 3.6 0M925.08 450.02a1.8 1.8 0 1 0 -3.6 0a1.8 1.8 0 1 0 3.6 0M925.08 455.26a1.8 1.8 0 1 0 -3.6 0a1.8 1.8 0 1 0 3.6 0M925.08 460.50a1.8 1.8 0 1 0 -3.6 0a1.8 1.8 0 1 0 3.6 0M925.08 465.74a1.8 1.8 0 1 0 -3.6 0a1.8 1.8 0 1 0 3.6 0M925.08 470.98a1.8 1.8 0 1 0 -3.6 0a1.8 1.8 0 1 0 3.6 0M930.24 397.62a1.8 1.8 0 1 0 -3.6 0a1.8 1.8 0 1 0 3.6 0M930.24 402.86a1.8 1.8 0 1 0 -3.6 0a1.8 1.8 0 1 0 3.6 0M930.24 408.10a1.8 1.8 0 1 0 -3.6 0a1.8 1.8 0 1 0 3.6 0M930.24 413.34a1.8 1.8 0 1 0 -3.6 0a1.8 1.8 0 1 0 3.6 0M930.24 418.58a1.8 1.8 0 1 0 -3.6 0a1.8 1.8 0 1 0 3.6 0M930.24 423.82a1.8 1.8 0 1 0 -3.6 0a1.8 1.8 0 1 0 3.6 0M930.24 429.06a1.8 1.8 0 1 0 -3.6 0a1.8 1.8 0 1 0 3.6 0M930.24 434.30a1.8 1.8 0 1 0 -3.6 0a1.8 1.8 0 1 0 3.6 0M930.24 439.54a1.8 1.8 0 1 0 -3.6 0a1.8 1.8 0 1 0 3.6 0M930.24 444.78a1.8 1.8 0 1 0 -3.6 0a1.8 1.8 0 1 0 3.6 0M930.24 450.02a1.8 1.8 0 1 0 -3.6 0a1.8 1.8 0 1 0 3.6 0M930.24 455.26a1.8 1.8 0 1 0 -3.6 0a1.8 1.8 0 1 0 3.6 0M930.24 460.50a1.8 1.8 0 1 0 -3.6 0a1.8 1.8 0 1 0 3.6 0M930.24 465.74a1.8 1.8 0 1 0 -3.6 0a1.8 1.8 0 1 0 3.6 0M930.24 470.98a1.8 1.8 0 1 0 -3.6 0a1.8 1.8 0 1 0 3.6 0M935.40 397.62a1.8 1.8 0 1 0 -3.6 0a1.8 1.8 0 1 0 3.6 0M935.40 402.86a1.8 1.8 0 1 0 -3.6 0a1.8 1.8 0 1 0 3.6 0M935.40 408.10a1.8 1.8 0 1 0 -3.6 0a1.8 1.8 0 1 0 3.6 0M935.40 413.34a1.8 1.8 0 1 0 -3.6 0a1.8 1.8 0 1 0 3.6 0M935.40 418.58a1.8 1.8 0 1 0 -3.6 0a1.8 1.8 0 1 0 3.6 0M935.40 423.82a1.8 1.8 0 1 0 -3.6 0a1.8 1.8 0 1 0 3.6 0M935.40 429.06a1.8 1.8 0 1 0 -3.6 0a1.8 1.8 0 1 0 3.6 0M935.40 434.30a1.8 1.8 0 1 0 -3.6 0a1.8 1.8 0 1 0 3.6 0M935.40 439.54a1.8 1.8 0 1 0 -3.6 0a1.8 1.8 0 1 0 3.6 0M935.40 444.78a1.8 1.8 0 1 0 -3.6 0a1.8 1.8 0 1 0 3.6 0M935.40 450.02a1.8 1.8 0 1 0 -3.6 0a1.8 1.8 0 1 0 3.6 0M935.40 455.26a1.8 1.8 0 1 0 -3.6 0a1.8 1.8 0 1 0 3.6 0M935.40 460.50a1.8 1.8 0 1 0 -3.6 0a1.8 1.8 0 1 0 3.6 0M935.40 465.74a1.8 1.8 0 1 0 -3.6 0a1.8 1.8 0 1 0 3.6 0M935.40 470.98a1.8 1.8 0 1 0 -3.6 0a1.8 1.8 0 1 0 3.6 0M940.56 397.62a1.8 1.8 0 1 0 -3.6 0a1.8 1.8 0 1 0 3.6 0M940.56 402.86a1.8 1.8 0 1 0 -3.6 0a1.8 1.8 0 1 0 3.6 0M940.56 408.10a1.8 1.8 0 1 0 -3.6 0a1.8 1.8 0 1 0 3.6 0M940.56 413.34a1.8 1.8 0 1 0 -3.6 0a1.8 1.8 0 1 0 3.6 0M940.56 418.58a1.8 1.8 0 1 0 -3.6 0a1.8 1.8 0 1 0 3.6 0M940.56 423.82a1.8 1.8 0 1 0 -3.6 0a1.8 1.8 0 1 0 3.6 0M940.56 429.06a1.8 1.8 0 1 0 -3.6 0a1.8 1.8 0 1 0 3.6 0M940.56 434.30a1.8 1.8 0 1 0 -3.6 0a1.8 1.8 0 1 0 3.6 0M940.56 439.54a1.8 1.8 0 1 0 -3.6 0a1.8 1.8 0 1 0 3.6 0M940.56 444.78a1.8 1.8 0 1 0 -3.6 0a1.8 1.8 0 1 0 3.6 0M940.56 450.02a1.8 1.8 0 1 0 -3.6 0a1.8 1.8 0 1 0 3.6 0M940.56 455.26a1.8 1.8 0 1 0 -3.6 0a1.8 1.8 0 1 0 3.6 0M940.56 460.50a1.8 1.8 0 1 0 -3.6 0a1.8 1.8 0 1 0 3.6 0M940.56 465.74a1.8 1.8 0 1 0 -3.6 0a1.8 1.8 0 1 0 3.6 0M940.56 470.98a1.8 1.8 0 1 0 -3.6 0a1.8 1.8 0 1 0 3.6 0M945.72 397.62a1.8 1.8 0 1 0 -3.6 0a1.8 1.8 0 1 0 3.6 0M945.72 402.86a1.8 1.8 0 1 0 -3.6 0a1.8 1.8 0 1 0 3.6 0M945.72 408.10a1.8 1.8 0 1 0 -3.6 0a1.8 1.8 0 1 0 3.6 0M945.72 413.34a1.8 1.8 0 1 0 -3.6 0a1.8 1.8 0 1 0 3.6 0M945.72 418.58a1.8 1.8 0 1 0 -3.6 0a1.8 1.8 0 1 0 3.6 0M945.72 423.82a1.8 1.8 0 1 0 -3.6 0a1.8 1.8 0 1 0 3.6 0M945.72 429.06a1.8 1.8 0 1 0 -3.6 0a1.8 1.8 0 1 0 3.6 0M945.72 434.30a1.8 1.8 0 1 0 -3.6 0a1.8 1.8 0 1 0 3.6 0M945.72 439.54a1.8 1.8 0 1 0 -3.6 0a1.8 1.8 0 1 0 3.6 0M945.72 444.78a1.8 1.8 0 1 0 -3.6 0a1.8 1.8 0 1 0 3.6 0M945.72 450.02a1.8 1.8 0 1 0 -3.6 0a1.8 1.8 0 1 0 3.6 0M945.72 455.26a1.8 1.8 0 1 0 -3.6 0a1.8 1.8 0 1 0 3.6 0M945.72 460.50a1.8 1.8 0 1 0 -3.6 0a1.8 1.8 0 1 0 3.6 0M945.72 465.74a1.8 1.8 0 1 0 -3.6 0a1.8 1.8 0 1 0 3.6 0M945.72 470.98a1.8 1.8 0 1 0 -3.6 0a1.8 1.8 0 1 0 3.6 0M950.88 397.62a1.8 1.8 0 1 0 -3.6 0a1.8 1.8 0 1 0 3.6 0M950.88 402.86a1.8 1.8 0 1 0 -3.6 0a1.8 1.8 0 1 0 3.6 0M950.88 408.10a1.8 1.8 0 1 0 -3.6 0a1.8 1.8 0 1 0 3.6 0M950.88 413.34a1.8 1.8 0 1 0 -3.6 0a1.8 1.8 0 1 0 3.6 0M950.88 418.58a1.8 1.8 0 1 0 -3.6 0a1.8 1.8 0 1 0 3.6 0M950.88 423.82a1.8 1.8 0 1 0 -3.6 0a1.8 1.8 0 1 0 3.6 0M950.88 429.06a1.8 1.8 0 1 0 -3.6 0a1.8 1.8 0 1 0 3.6 0M950.88 434.30a1.8 1.8 0 1 0 -3.6 0a1.8 1.8 0 1 0 3.6 0M950.88 439.54a1.8 1.8 0 1 0 -3.6 0a1.8 1.8 0 1 0 3.6 0M950.88 444.78a1.8 1.8 0 1 0 -3.6 0a1.8 1.8 0 1 0 3.6 0M950.88 450.02a1.8 1.8 0 1 0 -3.6 0a1.8 1.8 0 1 0 3.6 0M950.88 455.26a1.8 1.8 0 1 0 -3.6 0a1.8 1.8 0 1 0 3.6 0M950.88 460.50a1.8 1.8 0 1 0 -3.6 0a1.8 1.8 0 1 0 3.6 0M950.88 465.74a1.8 1.8 0 1 0 -3.6 0a1.8 1.8 0 1 0 3.6 0M950.88 470.98a1.8 1.8 0 1 0 -3.6 0a1.8 1.8 0 1 0 3.6 0" fill="none" stroke="#98a4ae" stroke-width="0.6" shape-rendering="geometricPrecision"/>
<rect x="879.4" y="395.3" width="72.3" height="78.4" fill="none" stroke="#a4b0ba" stroke-width="0.7" shape-rendering="geometricPrecision"/>
<circle cx="872.3" cy="408" r="2" fill="#f06020" shape-rendering="geometricPrecision"/>
<circle cx="872.3" cy="460.5" r="2" fill="#f06020" shape-rendering="geometricPrecision"/>
<line x1="876.5" y1="410" x2="876.5" y2="460" stroke="#555555" stroke-width="0.6" shape-rendering="geometricPrecision"/>
<path d="M876.5 409 L875 413 L878 413 Z M876.5 461 L875 457 L878 457 Z" fill="#333" shape-rendering="geometricPrecision"/>
<text font-size="5" fill="#777" font-family="Liberation Sans" transform="translate(874,437) rotate(-90)">45</text>
<circle cx="752.5" cy="525" r="17.5" fill="none" stroke="#9fb0bb" stroke-width="0.7" shape-rendering="geometricPrecision"/>
<circle cx="752.5" cy="525" r="14.5" fill="none" stroke="#0a0a0a" stroke-width="2.0" shape-rendering="geometricPrecision"/>
<circle cx="752.5" cy="525" r="13.0" fill="none" stroke="#e8a0a8" stroke-width="0.5" shape-rendering="geometricPrecision"/>
<circle cx="992.5" cy="525" r="17.5" fill="none" stroke="#9fb0bb" stroke-width="0.7" shape-rendering="geometricPrecision"/>
<circle cx="992.5" cy="525" r="14.5" fill="none" stroke="#0a0a0a" stroke-width="2.0" shape-rendering="geometricPrecision"/>
<circle cx="992.5" cy="525" r="13.0" fill="none" stroke="#e8a0a8" stroke-width="0.5" shape-rendering="geometricPrecision"/>
<circle cx="752.5" cy="562.5" r="16.8" fill="none" stroke="#9fb0bb" stroke-width="0.7" shape-rendering="geometricPrecision"/>
<circle cx="752.5" cy="562.5" r="13.8" fill="none" stroke="#0a0a0a" stroke-width="2.0" shape-rendering="geometricPrecision"/>
<circle cx="752.5" cy="562.5" r="12.3" fill="none" stroke="#e8a0a8" stroke-width="0.5" shape-rendering="geometricPrecision"/>
<circle cx="992.5" cy="562.5" r="16.8" fill="none" stroke="#9fb0bb" stroke-width="0.7" shape-rendering="geometricPrecision"/>
<circle cx="992.5" cy="562.5" r="13.8" fill="none" stroke="#0a0a0a" stroke-width="2.0" shape-rendering="geometricPrecision"/>
<circle cx="992.5" cy="562.5" r="12.3" fill="none" stroke="#e8a0a8" stroke-width="0.5" shape-rendering="geometricPrecision"/>
<circle cx="752.5" cy="603.5" r="17.8" fill="none" stroke="#9fb0bb" stroke-width="0.7" shape-rendering="geometricPrecision"/>
<circle cx="752.5" cy="603.5" r="14.8" fill="none" stroke="#0a0a0a" stroke-width="2.0" shape-rendering="geometricPrecision"/>
<circle cx="752.5" cy="603.5" r="13.3" fill="none" stroke="#e8a0a8" stroke-width="0.5" shape-rendering="geometricPrecision"/>
<circle cx="992.5" cy="603.5" r="17.8" fill="none" stroke="#9fb0bb" stroke-width="0.7" shape-rendering="geometricPrecision"/>
<circle cx="992.5" cy="603.5" r="14.8" fill="none" stroke="#0a0a0a" stroke-width="2.0" shape-rendering="geometricPrecision"/>
<circle cx="992.5" cy="603.5" r="13.3" fill="none" stroke="#e8a0a8" stroke-width="0.5" shape-rendering="geometricPrecision"/>
<rect x="777.5" y="510.5" width="85" height="28.5" fill="none" stroke="#7c8a94" stroke-width="1"/>
<rect x="778.5" y="511.5" width="83" height="26.5" fill="none" stroke="#b4c2cc" stroke-width="0.8"/>
<rect x="780" y="513" width="80" height="23.5" fill="none" stroke="#eeaab4" stroke-width="0.7"/>
<rect x="882.5" y="510.5" width="85" height="28.5" fill="none" stroke="#7c8a94" stroke-width="1"/>
<rect x="883.5" y="511.5" width="83" height="26.5" fill="none" stroke="#b4c2cc" stroke-width="0.8"/>
<rect x="885" y="513" width="80" height="23.5" fill="none" stroke="#eeaab4" stroke-width="0.7"/>
<rect x="777.5" y="550.5" width="85" height="27.5" fill="none" stroke="#7c8a94" stroke-width="1"/>
<rect x="778.5" y="551.5" width="83" height="25.5" fill="none" stroke="#b4c2cc" stroke-width="0.8"/>
<rect x="780" y="553" width="80" height="22.5" fill="none" stroke="#eeaab4" stroke-width="0.7"/>
<rect x="882.5" y="550.5" width="85" height="27.5" fill="none" stroke="#7c8a94" stroke-width="1"/>
<rect x="883.5" y="551.5" width="83" height="25.5" fill="none" stroke="#b4c2cc" stroke-width="0.8"/>
<rect x="885" y="553" width="80" height="22.5" fill="none" stroke="#eeaab4" stroke-width="0.7"/>
<rect x="777.5" y="590.0" width="85" height="27.5" fill="none" stroke="#7c8a94" stroke-width="1"/>
<rect x="778.5" y="591.0" width="83" height="25.5" fill="none" stroke="#b4c2cc" stroke-width="0.8"/>
<rect x="780" y="592.5" width="80" height="22.5" fill="none" stroke="#eeaab4" stroke-width="0.7"/>
<rect x="882.5" y="590.0" width="85" height="27.5" fill="none" stroke="#7c8a94" stroke-width="1"/>
<rect x="883.5" y="591.0" width="83" height="25.5" fill="none" stroke="#b4c2cc" stroke-width="0.8"/>
<rect x="885" y="592.5" width="80" height="22.5" fill="none" stroke="#eeaab4" stroke-width="0.7"/>
<rect x="52" y="48" width="21" height="19" fill="#414141" />
<circle cx="104" cy="58" r="12.5" fill="#414141" shape-rendering="geometricPrecision"/>
<path d="M9 67 V61 C9 53 15 48.7 24 48.7 C34 48.7 42 56 50.5 67 Z" fill="#4d4d4d" shape-rendering="geometricPrecision"/>
<path d="M14 67 V62 C14 56 17 53 21 53 C25 53 28 57 28 62 V67 Z" fill="#414141" shape-rendering="geometricPrecision"/>
<path d="M48 48 H52 C51 55 51 60 52 67 H48 C49 60 49 55 48 48 Z" fill="#4d4d4d" shape-rendering="geometricPrecision"/>
<circle cx="67" cy="59" r="6" fill="#4d4d4d" shape-rendering="geometricPrecision"/>
<path d="M73 48 H80 C79 55 79 60 80 67 H73 C74 60 74 55 73 48 Z" fill="#4d4d4d" shape-rendering="geometricPrecision"/>
<circle cx="104" cy="58.5" r="10" fill="#4d4d4d" shape-rendering="geometricPrecision"/>
<path d="M118.6 48 H167.8 L166 67 H118.6 Z" fill="#4d4d4d" shape-rendering="geometricPrecision"/>
<rect x="100" y="69" width="25" height="24" rx="3" fill="#1c1c1c"/>
<path d="M12 73 L15 76.5 H13 V80 H16.5 V78 L20 81 L16.5 84 V82 H13 V85.5 H15 L12 89 L9 85.5 H11 V82 H7.5 V84 L4 81 L7.5 78 V80 H11 V76.5 H9 Z" fill="#c8c8c8" shape-rendering="geometricPrecision"/>
<path d="M18.8 89.8 L21.8 86.8 L21.8 89.8 Z" fill="#c8c8c8" shape-rendering="geometricPrecision"/>
<rect x="29.5" y="76.5" width="14" height="10" fill="none" stroke="#c8c8c8" stroke-width="1.2" stroke-dasharray="1.2 1.2"/>
<rect x="32" y="79" width="9" height="5" fill="#c8c8c8" />
<path d="M43.8 89.8 L46.8 86.8 L46.8 89.8 Z" fill="#c8c8c8" shape-rendering="geometricPrecision"/>
<ellipse cx="62" cy="78.5" rx="6.8" ry="4.2" fill="none" stroke="#c8c8c8" stroke-width="1.5" shape-rendering="geometricPrecision"/>
<path d="M58 81 C56 84 60 85 60 87 C60 88.5 59 89 58.5 89" fill="none" stroke="#c8c8c8" stroke-width="1.5" shape-rendering="geometricPrecision"/>
<path d="M68.8 89.8 L71.8 86.8 L71.8 89.8 Z" fill="#c8c8c8" shape-rendering="geometricPrecision"/>
<rect x="81.5" y="73.5" width="11" height="9" fill="none" stroke="#c8c8c8" stroke-width="1.2" stroke-dasharray="1.2 1.2"/>
<circle cx="86.5" cy="77.5" r="2.4" fill="#c8c8c8" shape-rendering="geometricPrecision"/>
<circle cx="84" cy="86.5" r="2.4" fill="#8a8a8a" shape-rendering="geometricPrecision"/>
<circle cx="90" cy="86.5" r="2" fill="none" stroke="#c8c8c8" stroke-width="1" shape-rendering="geometricPrecision"/>
<path d="M93.8 89.8 L96.8 86.8 L96.8 89.8 Z" fill="#c8c8c8" shape-rendering="geometricPrecision"/>
<path d="M106.5 74 V86.5 H117" fill="none" stroke="#c8c8c8" stroke-width="1.6" />
<path d="M105 77.5 H116 V87" fill="none" stroke="#c8c8c8" stroke-width="1.6" />
<rect x="118" y="85" width="1" height="2" fill="#c8c8c8" />
<path d="M130 74 H137 V79 L134 82 L130 79 Z" fill="#c8c8c8"/>
<path d="M137 78 L143 84 L138 89 L132 83 Z" fill="#c8c8c8" shape-rendering="geometricPrecision"/>
<path d="M131 84 V88 H134 M130 85 H133" fill="none" stroke="#c8c8c8" stroke-width="1" />
<path d="M143.8 89.8 L146.8 86.8 L146.8 89.8 Z" fill="#c8c8c8" shape-rendering="geometricPrecision"/>
<path d="M154 89 V83 C156 79 158 78 161 77 C163 76 166 73 169 77 C167 76 165 77 166 79 L167 85 L169 89 Z" fill="#c8c8c8" shape-rendering="geometricPrecision"/>
<path d="M168.8 89.8 L171.8 86.8 L171.8 89.8 Z" fill="#c8c8c8" shape-rendering="geometricPrecision"/>
<g transform="translate(0,2)">
<path d="M6 102 C5 99 8 97 10 98 L12 98 V93 H14 V99 L19 104 L13 110 L7 104 Z" fill="#c8c8c8" shape-rendering="geometricPrecision"/>
<rect x="5" y="98" width="2" height="8" fill="#8a8a8a" />
<path d="M18.8 111.8 L21.8 108.8 L21.8 111.8 Z" fill="#c8c8c8" shape-rendering="geometricPrecision"/>
<path d="M30 113 C30 110 32 109 34 108 L44 97 L45 98 L36 110 C35 112 33 113 30 113 Z" fill="#c8c8c8" shape-rendering="geometricPrecision"/>
<path d="M43.8 111.8 L46.8 108.8 L46.8 111.8 Z" fill="#c8c8c8" shape-rendering="geometricPrecision"/>
<path d="M60 100 L65 95 L69 99 L64 104 Z" fill="#c8c8c8" shape-rendering="geometricPrecision"/>
<path d="M57 104 L60 100 L64 104 L61 107 Z" fill="#8a8a8a" shape-rendering="geometricPrecision"/>
<line x1="55" y1="111.5" x2="58" y2="111.5" stroke="#c8c8c8" stroke-width="1.2" />
<line x1="62" y1="111.5" x2="69" y2="111.5" stroke="#c8c8c8" stroke-width="1.2" />
<path d="M68.8 111.8 L71.8 108.8 L71.8 111.8 Z" fill="#c8c8c8" shape-rendering="geometricPrecision"/>
<circle cx="87" cy="101" r="2.3" fill="#c8c8c8" shape-rendering="geometricPrecision"/>
<rect x="86" y="103" width="2" height="3" fill="#c8c8c8" />
<path d="M81 111 V107 C81 106 82 105.5 84 105.5 H90 C92 105.5 93 106 93 107 V111 Z" fill="#c8c8c8" shape-rendering="geometricPrecision"/>
<path d="M93.8 111.8 L96.8 108.8 L96.8 111.8 Z" fill="#c8c8c8" shape-rendering="geometricPrecision"/>
<path d="M107 104 C104 100 107 96 112 96 C117 96 120 100 117 103 C115 105 112 104 111 104 L106 110 L104 108 Z" fill="#c8c8c8" shape-rendering="geometricPrecision"/>
<path d="M118.8 111.8 L121.8 108.8 L121.8 111.8 Z" fill="#c8c8c8" shape-rendering="geometricPrecision"/>
<path d="M130 98 V112 M130 98 C133 96 137 96 140 97" fill="none" stroke="#c8c8c8" stroke-width="1.4" shape-rendering="geometricPrecision"/>
<rect x="128.5" y="97" width="3" height="2" fill="#c8c8c8" />
<rect x="128.5" y="110" width="3" height="2" fill="#c8c8c8" />
<rect x="139" y="96" width="3" height="3" fill="#c8c8c8" />
<rect x="138" y="102" width="7" height="10" fill="#c8c8c8" />
<rect x="140" y="100" width="3" height="2" fill="#c8c8c8" />
<path d="M155 112 L161 96 H164 L170 112 H167 L165.5 107 H159.5 L158 112 Z M160.5 104 H164.5 L162.5 98.5 Z" fill="#c8c8c8" shape-rendering="geometricPrecision"/>
</g>
<path d="M7 136 L15 125 L17 127 L9 138 Z" fill="#c8c8c8" shape-rendering="geometricPrecision"/>
<circle cx="17.5" cy="122.5" r="2.8" fill="#c8c8c8" shape-rendering="geometricPrecision"/>
<circle cx="7" cy="137.5" r="1.5" fill="#c8c8c8" shape-rendering="geometricPrecision"/>
<path d="M18.8 137.8 L21.8 134.8 L21.8 137.8 Z" fill="#c8c8c8" shape-rendering="geometricPrecision"/>
<circle cx="36" cy="128" r="5.2" fill="none" stroke="#c8c8c8" stroke-width="1.6" shape-rendering="geometricPrecision"/>
<line x1="39.5" y1="131.5" x2="43.5" y2="135.5" stroke="#c8c8c8" stroke-width="1.8" shape-rendering="geometricPrecision"/>
<rect x="85" y="159" width="24" height="24" fill="#000" />
<rect x="86" y="160" width="22" height="22" fill="#ffffff" />
<rect x="69" y="145" width="24" height="24" fill="#000" />
<rect x="70" y="146" width="22" height="22" fill="#f3f6ff" />
<path d="M99 148.5 H107 V155" fill="none" stroke="#c8c8c8" stroke-width="1.2" />
<path d="M97 148.5 L100 146 V151 Z M104.5 154 H109.5 L107 157 Z" fill="#c8c8c8" />
<rect x="69" y="171" width="7" height="7" fill="#000" />
<rect x="70" y="172" width="5" height="5" fill="#000" />
<rect x="74" y="176" width="7" height="7" fill="#fff" />
<rect x="73" y="175" width="1" height="1" fill="#000" />
<rect x="1" y="190" width="19" height="21" fill="#454545" />
<line x1="0.5" y1="190" x2="0.5" y2="211" stroke="#5a5a5a" stroke-width="1" />
<line x1="1" y1="189.5" x2="20" y2="189.5" stroke="#5a5a5a" stroke-width="1" />
<line x1="20.5" y1="190" x2="20.5" y2="211" stroke="#5a5a5a" stroke-width="1" />
<rect x="21" y="192" width="40" height="19" fill="#2a2a2a" />
<path d="M4 204 L12 195" fill="none" stroke="#c8c8c8" stroke-width="1.2" shape-rendering="geometricPrecision"/>
<circle cx="13" cy="202" r="4.2" fill="#c8c8c8" shape-rendering="geometricPrecision"/>
<rect x="12.5" y="200" width="1" height="5" fill="#333" />
<rect x="12.5" y="198.5" width="1" height="1" fill="#333" />
<path d="M24 201 C26 198 31 197 35 199 M24 201 L27 199 M24 201 L27 203 M36 205 C34 208 29 209 25 207 M36 205 L33 203 M36 205 L33 207" fill="none" stroke="#c8c8c8" stroke-width="1.2" shape-rendering="geometricPrecision"/>
<rect x="42" y="195" width="15" height="15" fill="#000" />
<rect x="43" y="196" width="13" height="13" fill="#fff" />
<rect x="47" y="199" width="4" height="3" fill="#cfe0ee" />
<rect x="163.5" y="196.5" width="9" height="9" fill="none" stroke="#a8a8a8" stroke-width="1"/>
<path d="M171 198 L165.5 201 L171 204 Z" fill="#b0b0b0" shape-rendering="geometricPrecision"/>
<line x1="20" y1="211.5" x2="178" y2="211.5" stroke="#5a5a5a" stroke-width="1" />
<rect x="5" y="216" width="168" height="45" fill="#555555" />
<text x="9" y="230" font-size="11" fill="#e8e8e8" font-family="Liberation Sans" font-weight="bold" textLength="76" lengthAdjust="spacing" >Core Pointer</text>
<path d="M12.5 242 V254.5 H24" fill="none" stroke="#c8c8c8" stroke-width="2" />
<path d="M11 245 H23.5 V256" fill="none" stroke="#c8c8c8" stroke-width="2" />
<rect x="12" y="240" width="1" height="1" fill="#c8c8c8" />
<rect x="26" y="254" width="1.5" height="1.5" fill="#c8c8c8" />
<path d="M88 1017 V1024 M85.5 1021.5 L88 1024 L90.5 1021.5" fill="none" stroke="#c8c8c8" stroke-width="1.3" shape-rendering="geometricPrecision"/>
<rect x="83" y="1025" width="10" height="5" fill="#c8c8c8" />
<rect x="86" y="1027" width="4" height="1" fill="#3b3b3b" />
<rect x="1568" y="52" width="120" height="18" fill="#2a2a2a" />
<line x1="1589.5" y1="52" x2="1589.5" y2="70" stroke="#3a3a3a" stroke-width="1" />
<line x1="1610.5" y1="52" x2="1610.5" y2="70" stroke="#3a3a3a" stroke-width="1" />
<line x1="1631.5" y1="52" x2="1631.5" y2="70" stroke="#3a3a3a" stroke-width="1" />
<line x1="1652.5" y1="52" x2="1652.5" y2="70" stroke="#3a3a3a" stroke-width="1" />
<line x1="1672.5" y1="52" x2="1672.5" y2="70" stroke="#3a3a3a" stroke-width="1" />
<rect x="1572" y="54" width="15" height="14" fill="#000" />
<rect x="1573" y="55" width="13" height="12" fill="#fff" />
<rect x="1574" y="59" width="11" height="3" fill="#000" />
<defs><linearGradient id="og" x1="0" x2="1"><stop offset="0" stop-color="#7a3a00"/><stop offset="0.15" stop-color="#f0a030"/><stop offset="0.4" stop-color="#ffd080"/><stop offset="0.6" stop-color="#f8a030"/><stop offset="0.8" stop-color="#ffc860"/><stop offset="1" stop-color="#f09020"/></linearGradient><linearGradient id="imgg" x1="0" y1="0" x2="0" y2="1"><stop offset="0" stop-color="#4aa0e0"/><stop offset="0.5" stop-color="#d8e8f0"/><stop offset="0.7" stop-color="#3a7a3a"/><stop offset="1" stop-color="#80b0d0"/></linearGradient></defs>
<rect x="1593" y="54" width="15" height="14" fill="#000" />
<rect x="1594" y="55" width="13" height="12" fill="url(#og)" />
<rect x="1614" y="54" width="15" height="14" fill="#000" />
<rect x="1615" y="55" width="13" height="12" fill="#fff" />
<text x="1615.5" y="65.5" font-size="10" fill="#000" font-family="Liberation Sans" textLength="12" lengthAdjust="spacing" >Aa</text>
<rect x="1635" y="56" width="12" height="9" fill="#ddd" />
<rect x="1636" y="57" width="10" height="7" fill="url(#imgg)" />
<path d="M1655 67 C1655 64 1657 63 1659 62 L1667 54 L1668 55 L1661 64 C1660 66 1658 67 1655 67 Z" fill="#c8c8c8" shape-rendering="geometricPrecision"/>
<rect x="1674" y="55" width="2" height="2" fill="#c8c8c8" />
<rect x="1678" y="55" width="2" height="2" fill="#c8c8c8" />
<rect x="1674" y="59" width="2" height="2" fill="#c8c8c8" />
<path d="M1678 61 H1683 L1685 63 V66 H1679 Z" fill="#c8c8c8" shape-rendering="geometricPrecision"/>
<rect x="1688" y="50" width="20" height="20" fill="#454545" />
<path d="M1688.5 70 V49.5 H1707.5 V70" fill="none" stroke="#5a5a5a" stroke-width="1" />
<rect x="1692.5" y="54.5" width="12" height="9" fill="none" stroke="#c8c8c8" stroke-width="1.3"/>
<line x1="1692" y1="65.5" x2="1705" y2="65.5" stroke="#c8c8c8" stroke-width="1" />
<line x1="1693.5" y1="64" x2="1693.5" y2="67" stroke="#c8c8c8" stroke-width="1" />
<line x1="1703.5" y1="64" x2="1703.5" y2="67" stroke="#c8c8c8" stroke-width="1" />
<rect x="1697" y="53" width="3" height="1.5" fill="#c8c8c8" />
<rect x="1905.5" y="55.5" width="9" height="9" fill="none" stroke="#a8a8a8" stroke-width="1"/>
<path d="M1913 57 L1907.5 60 L1913 63 Z" fill="#b0b0b0" shape-rendering="geometricPrecision"/>
<line x1="1688" y1="70.5" x2="1917" y2="70.5" stroke="#5a5a5a" stroke-width="1" />
<rect x="1569" y="71" width="348" height="573" fill="#474747" />
<line x1="1568.5" y1="70" x2="1568.5" y2="669" stroke="#5a5a5a" stroke-width="1" />
<rect x="1570" y="72" width="347" height="14" fill="#3d3d3d" />
<text x="1571" y="83" font-size="11.8" fill="#ececec" font-family="Liberation Sans" font-weight="bold" textLength="81" lengthAdjust="spacing" >Zuschneiden</text>
<rect x="1573" y="89" width="13" height="13" rx="3" fill="#202020"/>
<text x="1591" y="99" font-size="11" fill="#e0e0e0" font-family="Liberation Sans" textLength="117" lengthAdjust="spacing" >Nur die aktive Ebene</text>
<rect x="1573" y="112" width="13" height="13" rx="3" fill="#202020"/>
<text x="1591" y="122" font-size="11" fill="#e0e0e0" font-family="Liberation Sans" textLength="162" lengthAdjust="spacing" >Abgeschnittene Pixel löschen</text>
<rect x="1573" y="135" width="13" height="13" rx="3" fill="#202020"/>
<text x="1591" y="145" font-size="11" fill="#e0e0e0" font-family="Liberation Sans" textLength="114" lengthAdjust="spacing" >Vergrößern zulassen</text>
<rect x="1573" y="160" width="13" height="13" rx="3" fill="#202020"/>
<text x="1591" y="170" font-size="11" fill="#e0e0e0" font-family="Liberation Sans" textLength="135" lengthAdjust="spacing" >Aus der Mitte aufziehen</text>
<rect x="1574" y="187" width="13" height="13" rx="3" fill="#202020"/>
<rect x="1592.5" y="180.5" width="324" height="26" rx="4" fill="#2b2b2b" stroke="#202020" stroke-width="1"/>
<text x="1599" y="196.6" font-size="11" fill="#e0e0e0" font-family="Liberation Sans" textLength="35" lengthAdjust="spacing" >Fixiert</text>
<text x="1891" y="196.6" font-size="11" fill="#e0e0e0" font-family="Liberation Sans" text-anchor="end" textLength="90" lengthAdjust="spacing" >Seitenverhältnis</text>
<path d="M1897.5 189.5 L1903 195 L1908.5 189.5" fill="none" stroke="#e0e0e0" stroke-width="1.4" shape-rendering="geometricPrecision"/>
<rect x="1587" y="211" width="285" height="22" fill="#555555" />
<rect x="1588" y="213" width="284" height="20" fill="#1e1e1e" />
<text x="1591" y="227" font-size="14" fill="#e8e8e8" font-family="Liberation Sans" font-style="italic" textLength="46" lengthAdjust="spacing" >Aktuell</text>
<path d="M1853 222 L1856 218 H1865 V226 H1856 Z" fill="#bbbbbb" shape-rendering="geometricPrecision"/>
<path d="M1858 220 L1862 224 M1862 220 L1858 224" fill="none" stroke="#1e1e1e" stroke-width="1.2" shape-rendering="geometricPrecision"/>
<rect x="1872.5" y="209.5" width="20" height="25" rx="3" fill="#2f2f2f" stroke="#222" stroke-width="1"/>
<path d="M1878.5 216.5 h6 l3 3 v9 h-9 z" fill="none" stroke="#a0a0a0" stroke-width="1" stroke-dasharray="1.5 1"/>
<rect x="1899.5" y="217.5" width="11" height="8" fill="none" stroke="#909090" stroke-width="1" stroke-dasharray="1.5 1"/>
<text x="1571" y="257.3" font-size="11" fill="#e0e0e0" font-family="Liberation Sans" textLength="45" lengthAdjust="spacing" >Position:</text>
<rect x="1866.5" y="241.5" width="50" height="25" rx="4" fill="#2b2b2b" stroke="#202020" stroke-width="1"/>
<text x="1873" y="258" font-size="11" fill="#e0e0e0" font-family="Liberation Sans" >px</text>
<path d="M1897.5 250.5 L1903 256 L1908.5 250.5" fill="none" stroke="#e0e0e0" stroke-width="1.4" shape-rendering="geometricPrecision"/>
<rect x="1587" y="269" width="164" height="21" fill="#1e1e1e" />
<rect x="1739" y="269" width="12" height="21" fill="#262626" />
<text x="1591" y="283.5" font-size="11" fill="#e0e0e0" font-family="Liberation Sans" textLength="20.25" lengthAdjust="spacing" >165</text>
<path d="M1742 276 L1745 273 L1748 276 Z" fill="#d0d0d0" shape-rendering="geometricPrecision"/>
<path d="M1742 283 L1745 286 L1748 283 Z" fill="#d0d0d0" shape-rendering="geometricPrecision"/>
<rect x="1753" y="269" width="164" height="21" fill="#1e1e1e" />
<rect x="1905" y="269" width="12" height="21" fill="#262626" />
<text x="1757" y="283.5" font-size="11" fill="#e0e0e0" font-family="Liberation Sans" textLength="20.25" lengthAdjust="spacing" >195</text>
<path d="M1908 276 L1911 273 L1914 276 Z" fill="#d0d0d0" shape-rendering="geometricPrecision"/>
<path d="M1908 283 L1911 286 L1914 283 Z" fill="#d0d0d0" shape-rendering="geometricPrecision"/>
<text x="1571" y="311.5" font-size="11" fill="#e0e0e0" font-family="Liberation Sans" textLength="37" lengthAdjust="spacing" >Größe:</text>
<rect x="1866.5" y="295.5" width="50" height="25" rx="4" fill="#2b2b2b" stroke="#202020" stroke-width="1"/>
<text x="1873" y="312" font-size="11" fill="#e0e0e0" font-family="Liberation Sans" >px</text>
<path d="M1897.5 304.5 L1903 310 L1908.5 304.5" fill="none" stroke="#e0e0e0" stroke-width="1.4" shape-rendering="geometricPrecision"/>
<rect x="1587" y="323" width="164" height="21" fill="#1e1e1e" />
<rect x="1739" y="323" width="12" height="21" fill="#262626" />
<text x="1591" y="337.5" font-size="11" fill="#e0e0e0" font-family="Liberation Sans" textLength="27.0" lengthAdjust="spacing" >1365</text>
<path d="M1742 330 L1745 327 L1748 330 Z" fill="#d0d0d0" shape-rendering="geometricPrecision"/>
<path d="M1742 337 L1745 340 L1748 337 Z" fill="#d0d0d0" shape-rendering="geometricPrecision"/>
<rect x="1753" y="323" width="164" height="21" fill="#1e1e1e" />
<rect x="1905" y="323" width="12" height="21" fill="#262626" />
<text x="1757" y="337.5" font-size="11" fill="#e0e0e0" font-family="Liberation Sans" textLength="27.0" lengthAdjust="spacing" >1557</text>
<path d="M1908 330 L1911 327 L1914 330 Z" fill="#d0d0d0" shape-rendering="geometricPrecision"/>
<path d="M1908 337 L1911 340 L1914 337 Z" fill="#d0d0d0" shape-rendering="geometricPrecision"/>
<rect x="1573" y="351" width="13" height="13" rx="3" fill="#202020"/>
<path d="M1576.5 354.5 L1582.5 360.5 M1582.5 354.5 L1576.5 360.5" fill="none" stroke="#ffffff" stroke-width="2" shape-rendering="geometricPrecision"/>
<text x="1591" y="361" font-size="11" fill="#8c8c8c" font-family="Liberation Sans" textLength="73" lengthAdjust="spacing" >Hervorheben</text>
<rect x="1587" y="369" width="330" height="17" fill="#8a8a8a" />
<rect x="1588" y="370" width="328" height="15" fill="#2b2b2b" />
<rect x="1588" y="370" width="157" height="15" fill="#5a5a5a" />
<line x1="1745.5" y1="370" x2="1745.5" y2="385" stroke="#202020" stroke-width="1" />
<text x="1589" y="381" font-size="11" fill="#e0e0e0" font-family="Liberation Sans" textLength="124" lengthAdjust="spacing" >Glanzlichter-Deckkraft</text>
<text x="1902" y="381" font-size="11" fill="#e0e0e0" font-family="Liberation Sans" text-anchor="end" textLength="24" lengthAdjust="spacing" >50,0</text>
<path d="M1906 376 L1909.5 372 L1913 376 Z M1906 379 L1909.5 383 L1913 379 Z" fill="#d0d0d0" shape-rendering="geometricPrecision"/>
<rect x="1571.5" y="390.5" width="345" height="26" rx="4" fill="#2b2b2b" stroke="#202020" stroke-width="1"/>
<text x="1582" y="407.3" font-size="11" fill="#e0e0e0" font-family="Liberation Sans" textLength="89" lengthAdjust="spacing" >Keine Hilfslinien</text>
<path d="M1898.5 400.5 L1904 406 L1909.5 400.5" fill="none" stroke="#e0e0e0" stroke-width="1.4" shape-rendering="geometricPrecision"/>
<rect x="1571.5" y="421.5" width="345" height="22" rx="4" fill="#2e2e2e" stroke="#202020" stroke-width="1"/>
<text x="1744" y="436" font-size="11" fill="#e0e0e0" font-family="Liberation Sans" text-anchor="middle" textLength="141" lengthAdjust="spacing" >Automatisch schrumpfen</text>
<rect x="1573" y="451" width="13" height="13" rx="3" fill="#202020"/>
<text x="1591" y="461.5" font-size="11" fill="#e0e0e0" font-family="Liberation Sans" textLength="155" lengthAdjust="spacing" >Vereinigung mitschrumpfen</text>
<rect x="1569" y="644" width="348" height="25" fill="#3d3d3d" />
<path d="M1613 646 V654 M1610.5 651.5 L1613 654 L1615.5 651.5" fill="none" stroke="#c8c8c8" stroke-width="1.3" shape-rendering="geometricPrecision"/>
<rect x="1608" y="655" width="10" height="5" fill="#c8c8c8" />
<rect x="1611" y="657" width="4" height="1" fill="#3d3d3d" />
<path d="M1697.5 651.2 A5 5 0 1 1 1694.8 655.8" fill="none" stroke="#c8c8c8" stroke-width="1.8" shape-rendering="geometricPrecision"/>
<path d="M1693 652 L1698.5 649 L1698.5 654.5 Z" fill="#c8c8c8" shape-rendering="geometricPrecision"/>
<rect x="1779" y="649" width="13" height="13" fill="#c8c8c8" />
<path d="M1781.5 651.5 L1789.5 659.5 M1789.5 651.5 L1781.5 659.5" fill="none" stroke="#3d3d3d" stroke-width="2.2" shape-rendering="geometricPrecision"/>
<path d="M1867.5 655 A5 5 0 1 1 1872 661" fill="none" stroke="#c8c8c8" stroke-width="1.8" shape-rendering="geometricPrecision"/>
<path d="M1865 652.5 L1870 652.5 L1867.5 656.5 Z" fill="#c8c8c8" shape-rendering="geometricPrecision"/>
<circle cx="1867.5" cy="660" r="1.8" fill="#c8c8c8" shape-rendering="geometricPrecision"/>
<line x1="1568" y1="669.5" x2="1917" y2="669.5" stroke="#5a5a5a" stroke-width="1" />
<rect x="1735" y="670" width="4" height="2" fill="#aaaaaa" />
<rect x="1742" y="670" width="4" height="2" fill="#aaaaaa" />
<rect x="1749" y="670" width="4" height="2" fill="#aaaaaa" />
<rect x="1589" y="676" width="98" height="18" fill="#2a2a2a" />
<line x1="1607.5" y1="676" x2="1607.5" y2="694" stroke="#3a3a3a" stroke-width="1" />
<line x1="1627.5" y1="676" x2="1627.5" y2="694" stroke="#3a3a3a" stroke-width="1" />
<line x1="1646.5" y1="676" x2="1646.5" y2="694" stroke="#3a3a3a" stroke-width="1" />
<line x1="1665.5" y1="676" x2="1665.5" y2="694" stroke="#3a3a3a" stroke-width="1" />
<rect x="1570" y="674" width="19" height="20" fill="#454545" />
<path d="M1569.5 694 V673.5 H1588.5 V694" fill="none" stroke="#5a5a5a" stroke-width="1" />
<rect x="1572.5" y="677.5" width="12" height="13" fill="none" stroke="#c8c8c8" stroke-width="1.2"/>
<line x1="1575.5" y1="679" x2="1575.5" y2="689" stroke="#c8c8c8" stroke-width="1.2" />
<line x1="1578.5" y1="679" x2="1578.5" y2="689" stroke="#c8c8c8" stroke-width="1.2" />
<line x1="1581.5" y1="679" x2="1581.5" y2="689" stroke="#c8c8c8" stroke-width="1.2" />
<path d="M1591 682 H1604 M1591 681 V683 M1604 681 V683 M1597 681 V683" fill="none" stroke="#c8c8c8" stroke-width="1.6" />
<path d="M1592 688 C1594 683 1601 683 1603 688" fill="none" stroke="#c8c8c8" stroke-width="1.6" shape-rendering="geometricPrecision"/>
<path d="M1612 681 L1614 679 H1623 L1621 681 Z" fill="#c8c8c8" shape-rendering="geometricPrecision"/>
<path d="M1612 686 L1614 684 H1623 L1621 686 Z" fill="#c8c8c8" shape-rendering="geometricPrecision"/>
<path d="M1612 691 L1614 689 H1623 L1621 691 Z" fill="#c8c8c8" shape-rendering="geometricPrecision"/>
<rect x="1629.5" y="678.5" width="13" height="13" fill="#555" stroke="#aaa" stroke-width="1" stroke-dasharray="1.5 1"/>
<rect x="1647" y="677" width="16" height="16" fill="#151515" />
<path d="M1651 680 L1659 686 L1655.5 686.5 L1657.5 690 L1656 691 L1654 687.5 L1651 690 Z" fill="#c8c8c8" shape-rendering="geometricPrecision"/>
<rect x="1669" y="677" width="15" height="15" fill="#000" />
<rect x="1670" y="678" width="13" height="13" fill="#fff" />
<rect x="1674" y="682" width="5" height="5" fill="#c8def0" />
<rect x="1905.5" y="679.5" width="9" height="9" fill="none" stroke="#a8a8a8" stroke-width="1"/>
<path d="M1913 681 L1907.5 684 L1913 687 Z" fill="#b0b0b0" shape-rendering="geometricPrecision"/>
<line x1="1588" y1="694.5" x2="1917" y2="694.5" stroke="#5a5a5a" stroke-width="1" />
<rect x="1569" y="695" width="348" height="345" fill="#454545" />
<rect x="1572" y="697" width="345" height="115" fill="#1f1f1f" />
<path d="M1578 717 C1582 709.5 1594 709.5 1598 717 C1594 724.5 1582 724.5 1578 717 Z" fill="#cccccc" shape-rendering="geometricPrecision"/>
<path d="M1580.2 717 C1583.5 711.7 1592.5 711.7 1595.8 717 C1592.5 722.3 1583.5 722.3 1580.2 717 Z" fill="#1f1f1f" shape-rendering="geometricPrecision"/>
<circle cx="1588" cy="716.7" r="3.6" fill="#cccccc" shape-rendering="geometricPrecision"/>
<circle cx="1587" cy="715.7" r="1.1" fill="#1f1f1f" shape-rendering="geometricPrecision"/>
<rect x="1606" y="700" width="25" height="34" fill="#000000" />
<rect x="1607" y="701" width="23" height="32" fill="#ffffff" />
<rect x="1611" y="708" width="15" height="14" fill="#d2d2d2" />
<rect x="1614" y="704" width="9" height="1" fill="#dddddd" />
<text x="1637.3" y="720.3" font-size="12" fill="#e8e8e8" font-family="Liberation Sans" >Rot</text>
<path d="M1578 755 C1582 747.5 1594 747.5 1598 755 C1594 762.5 1582 762.5 1578 755 Z" fill="#cccccc" shape-rendering="geometricPrecision"/>
<path d="M1580.2 755 C1583.5 749.7 1592.5 749.7 1595.8 755 C1592.5 760.3 1583.5 760.3 1580.2 755 Z" fill="#1f1f1f" shape-rendering="geometricPrecision"/>
<circle cx="1588" cy="754.7" r="3.6" fill="#cccccc" shape-rendering="geometricPrecision"/>
<circle cx="1587" cy="753.7" r="1.1" fill="#1f1f1f" shape-rendering="geometricPrecision"/>
<rect x="1606" y="738" width="25" height="34" fill="#000000" />
<rect x="1607" y="739" width="23" height="32" fill="#ffffff" />
<rect x="1611" y="746" width="15" height="14" fill="#dedede" />
<rect x="1614" y="742" width="9" height="1" fill="#e6e6e6" />
<text x="1637.3" y="758.3" font-size="12" fill="#e8e8e8" font-family="Liberation Sans" >Grün</text>
<path d="M1578 793 C1582 785.5 1594 785.5 1598 793 C1594 800.5 1582 800.5 1578 793 Z" fill="#cccccc" shape-rendering="geometricPrecision"/>
<path d="M1580.2 793 C1583.5 787.7 1592.5 787.7 1595.8 793 C1592.5 798.3 1583.5 798.3 1580.2 793 Z" fill="#1f1f1f" shape-rendering="geometricPrecision"/>
<circle cx="1588" cy="792.7" r="3.6" fill="#cccccc" shape-rendering="geometricPrecision"/>
<circle cx="1587" cy="791.7" r="1.1" fill="#1f1f1f" shape-rendering="geometricPrecision"/>
<rect x="1606" y="776" width="25" height="34" fill="#000000" />
<rect x="1607" y="777" width="23" height="32" fill="#ffffff" />
<rect x="1611" y="784" width="15" height="14" fill="#eaeaea" />
<rect x="1614" y="780" width="9" height="1" fill="#eeeeee" />
<text x="1637.3" y="796.3" font-size="12" fill="#e8e8e8" font-family="Liberation Sans" >Blau</text>
<rect x="1569" y="812" width="348" height="24" fill="#3c3c3c" />
<text x="1571" y="828" font-size="11" fill="#b8b8b8" font-family="Liberation Sans" textLength="39" lengthAdjust="spacing" >Sperre:</text>
<path d="M1619 831 L1630 818" fill="none" stroke="#c8c8c8" stroke-width="1.4" shape-rendering="geometricPrecision"/>
<path d="M1619 831 L1621 827 L1623 829 Z" fill="#c8c8c8" shape-rendering="geometricPrecision"/>
<path d="M1647.5 818 V831 M1641 824.5 H1654" fill="none" stroke="#c8c8c8" stroke-width="1" stroke-dasharray="1.5 1"/>
<path d="M1647.5 817 L1645.5 819.5 H1649.5 Z M1647.5 832 L1645.5 829.5 H1649.5 Z M1640 824.5 L1642.5 822.5 V826.5 Z M1655 824.5 L1652.5 822.5 V826.5 Z" fill="#c8c8c8" shape-rendering="geometricPrecision"/>
<rect x="1571" y="836" width="346" height="177" fill="#303030" />
<rect x="1569" y="1013" width="348" height="25" fill="#3c3c3c" />
<line x1="1569" y1="1038.5" x2="1920" y2="1038.5" stroke="#555555" stroke-width="1" />
<path d="M1594.5 1021.5 V1031.5 H1603.5 V1022.5 L1601.5 1020.5 H1598" fill="none" stroke="#c8c8c8" stroke-width="1.2"/>
<path d="M1593.5 1017 V1023 M1590.5 1020 H1596.5" fill="none" stroke="#c8c8c8" stroke-width="1.2" />
<path d="M1650 1029 L1656 1023 L1662 1029" fill="none" stroke="#c8c8c8" stroke-width="1.6" shape-rendering="geometricPrecision"/>
<path d="M1707 1022 L1713 1028 L1719 1022" fill="none" stroke="#c8c8c8" stroke-width="1.6" shape-rendering="geometricPrecision"/>
<path d="M1765.5 1019.5 h8 v6 h-8 z M1768.5 1027.5 h8 v-6" fill="none" stroke="#c8c8c8" stroke-width="1"/>
<rect x="1821.5" y="1019.5" width="11" height="11" fill="#555" stroke="#999" stroke-width="1" stroke-dasharray="1 1"/>
<rect x="1880" y="1019" width="13" height="13" fill="#c8c8c8" />
<path d="M1882.5 1021.5 L1890.5 1029.5 M1890.5 1021.5 L1882.5 1029.5" fill="none" stroke="#3c3c3c" stroke-width="1.6" shape-rendering="geometricPrecision"/>
<rect x="219" y="50" width="302" height="585" fill="#000" opacity="0.45" filter="url(#msh)"/>
<defs><filter id="msh" x="-5%" y="-5%" width="110%" height="110%"><feGaussianBlur stdDeviation="1.3"/></filter></defs>
<rect x="217" y="48" width="302" height="585" fill="#5a5a5a" />
<rect x="218" y="49" width="300" height="583" fill="#474747" />
<text x="246.5" y="67.3" font-size="12" fill="#eeeeee" font-family="Liberation Sans" textLength="58" lengthAdjust="spacing" >Duplizieren</text>
<text x="508" y="67.3" font-size="12" fill="#eeeeee" font-family="Liberation Sans" text-anchor="end" textLength="37" lengthAdjust="spacing" >Strg+D</text>
<path d="M226.5 56.8 h8 v6 h-8 z M229.5 63.8 h8 v-6" fill="none" stroke="#b4b4b4" stroke-width="1"/>
<line x1="223" y1="80.5" x2="513" y2="80.5" stroke="#1e1e1e" stroke-width="1" />
<text x="246.5" y="106" font-size="12" fill="#eeeeee" font-family="Liberation Sans" textLength="36" lengthAdjust="spacing" >Modus</text>
<path d="M503.5 96 L508.5 101 L503.5 106" fill="none" stroke="#eeeeee" stroke-width="1.2" shape-rendering="geometricPrecision"/>
<text x="246.5" y="129" font-size="12" fill="#eeeeee" font-family="Liberation Sans" textLength="63" lengthAdjust="spacing" >Genauigkeit</text>
<path d="M503.5 119 L508.5 124 L503.5 129" fill="none" stroke="#eeeeee" stroke-width="1.2" shape-rendering="geometricPrecision"/>
<text x="246.5" y="152" font-size="12" fill="#eeeeee" font-family="Liberation Sans" textLength="81" lengthAdjust="spacing" >Farbverwaltung</text>
<path d="M503.5 142 L508.5 147 L503.5 152" fill="none" stroke="#eeeeee" stroke-width="1.2" shape-rendering="geometricPrecision"/>
<line x1="223" y1="165.5" x2="513" y2="165.5" stroke="#1e1e1e" stroke-width="1" />
<text x="246.5" y="191" font-size="12" fill="#eeeeee" font-family="Liberation Sans" textLength="79" lengthAdjust="spacing" >Transformation</text>
<path d="M503.5 181 L508.5 186 L503.5 191" fill="none" stroke="#eeeeee" stroke-width="1.2" shape-rendering="geometricPrecision"/>
<text x="246.5" y="214" font-size="12" fill="#eeeeee" font-family="Liberation Sans" textLength="94" lengthAdjust="spacing" >Leinwandgröße ...</text>
<path d="M228.5 206.5 h9 v8 h-9 z" fill="none" stroke="#b4b4b4" stroke-width="1"/>
<rect x="230" y="209" width="6" height="4" fill="#8a8a8a" />
<line x1="226.5" y1="208" x2="226.5" y2="215" stroke="#b4b4b4" stroke-width="1" />
<line x1="230" y1="203.5" x2="236" y2="203.5" stroke="#b4b4b4" stroke-width="1" />
<text x="246.5" y="237" font-size="12" fill="#eeeeee" font-family="Liberation Sans" textLength="161" lengthAdjust="spacing" >Leinwand an Ebenen anpassen</text>
<text x="246.5" y="260" font-size="12" fill="#8e8e8e" font-family="Liberation Sans" textLength="167" lengthAdjust="spacing" >Leinwand an Auswahl anpassen</text>
<text x="246.5" y="283" font-size="12" fill="#eeeeee" font-family="Liberation Sans" textLength="74" lengthAdjust="spacing" >Druckgröße ...</text>
<path d="M227 276 h11 v6 h-11 z" fill="#b4b4b4"/>
<rect x="229" y="273" width="7" height="3" fill="#b4b4b4" />
<rect x="229" y="281" width="7" height="3" fill="#8a8a8a" />
<text x="246.5" y="306" font-size="12" fill="#eeeeee" font-family="Liberation Sans" textLength="81" lengthAdjust="spacing" >Bild skalieren ...</text>
<path d="M229.5 298.5 h8 v8 h-8 z" fill="none" stroke="#b4b4b4" stroke-width="1"/>
<rect x="231" y="300" width="5" height="5" fill="#8a8a8a" />
<line x1="226" y1="295" x2="229" y2="298" stroke="#b4b4b4" stroke-width="1" shape-rendering="geometricPrecision"/>
<line x1="223" y1="319.5" x2="513" y2="319.5" stroke="#1e1e1e" stroke-width="1" />
<text x="246.5" y="345" font-size="12" fill="#8e8e8e" font-family="Liberation Sans" textLength="136" lengthAdjust="spacing" >Auf Auswahl zuschneiden</text>
<path d="M228.5 336.5 h8 v8 h-8 z" fill="none" stroke="#7a7a7a" stroke-width="1" stroke-dasharray="1 1"/>
<text x="246.5" y="368" font-size="12" fill="#eeeeee" font-family="Liberation Sans" textLength="121" lengthAdjust="spacing" >Auf Inhalt zuschneiden</text>
<path d="M228.5 358 v9.5 h9 M228 359.5 h8.5 v10" fill="none" stroke="#b4b4b4" stroke-width="1.2"/>
<text x="246.5" y="391" font-size="12" fill="#eeeeee" font-family="Liberation Sans" textLength="118" lengthAdjust="spacing" >Fanatisch zuschneiden</text>
<circle cx="234.5" cy="383.5" r="3.0999999999999996" fill="none" stroke="#b8b8b8" stroke-width="1.3" stroke-dasharray="1.1 1.3" shape-rendering="geometricPrecision"/>
<circle cx="234.5" cy="383.5" r="2.4" fill="none" stroke="#b8b8b8" stroke-width="1.4" shape-rendering="geometricPrecision"/>
<circle cx="229.5" cy="388.5" r="2.5999999999999996" fill="none" stroke="#9a9a9a" stroke-width="1.3" stroke-dasharray="1.1 1.3" shape-rendering="geometricPrecision"/>
<circle cx="229.5" cy="388.5" r="1.9" fill="none" stroke="#9a9a9a" stroke-width="1.4" shape-rendering="geometricPrecision"/>
<text x="246.5" y="414" font-size="12" fill="#eeeeee" font-family="Liberation Sans" textLength="121" lengthAdjust="spacing" >Mit Hilfslinien zerlegen</text>
<circle cx="234.5" cy="406.5" r="3.0999999999999996" fill="none" stroke="#b8b8b8" stroke-width="1.3" stroke-dasharray="1.1 1.3" shape-rendering="geometricPrecision"/>
<circle cx="234.5" cy="406.5" r="2.4" fill="none" stroke="#b8b8b8" stroke-width="1.4" shape-rendering="geometricPrecision"/>
<circle cx="229.5" cy="411.5" r="2.5999999999999996" fill="none" stroke="#9a9a9a" stroke-width="1.3" stroke-dasharray="1.1 1.3" shape-rendering="geometricPrecision"/>
<circle cx="229.5" cy="411.5" r="1.9" fill="none" stroke="#9a9a9a" stroke-width="1.4" shape-rendering="geometricPrecision"/>
<line x1="223" y1="427.5" x2="513" y2="427.5" stroke="#1e1e1e" stroke-width="1" />
<text x="246.5" y="453" font-size="12" fill="#eeeeee" font-family="Liberation Sans" textLength="151" lengthAdjust="spacing" >Sichtbare Ebenen vereinen ...</text>
<text x="508" y="453" font-size="12" fill="#eeeeee" font-family="Liberation Sans" text-anchor="end" textLength="39.8" lengthAdjust="spacing" >Strg+M</text>
<text x="246.5" y="476" font-size="12" fill="#eeeeee" font-family="Liberation Sans" textLength="110" lengthAdjust="spacing" >Bild zusammenfügen</text>
<text x="246.5" y="499" font-size="12" fill="#eeeeee" font-family="Liberation Sans" textLength="161" lengthAdjust="spacing" >Sichtbare Ebenen ausrichten ...</text>
<circle cx="234.5" cy="491.5" r="3.0999999999999996" fill="none" stroke="#b8b8b8" stroke-width="1.3" stroke-dasharray="1.1 1.3" shape-rendering="geometricPrecision"/>
<circle cx="234.5" cy="491.5" r="2.4" fill="none" stroke="#b8b8b8" stroke-width="1.4" shape-rendering="geometricPrecision"/>
<circle cx="229.5" cy="496.5" r="2.5999999999999996" fill="none" stroke="#9a9a9a" stroke-width="1.3" stroke-dasharray="1.1 1.3" shape-rendering="geometricPrecision"/>
<circle cx="229.5" cy="496.5" r="1.9" fill="none" stroke="#9a9a9a" stroke-width="1.4" shape-rendering="geometricPrecision"/>
<line x1="223" y1="513.5" x2="513" y2="513.5" stroke="#1e1e1e" stroke-width="1" />
<text x="246.5" y="538" font-size="12" fill="#eeeeee" font-family="Liberation Sans" textLength="53" lengthAdjust="spacing" >Hilfslinien</text>
<path d="M503.5 528 L508.5 533 L503.5 538" fill="none" stroke="#eeeeee" stroke-width="1.2" shape-rendering="geometricPrecision"/>
<text x="246.5" y="561" font-size="12" fill="#eeeeee" font-family="Liberation Sans" textLength="118" lengthAdjust="spacing" >Raster konfigurieren ...</text>
<path d="M225.5 549.5 h13 v13 h-13 z M225.5 553.5 h13 M225.5 557.5 h13 M229.5 549.5 v13 M233.5 549.5 v13" fill="none" stroke="#b4b4b4" stroke-width="1"/>
<line x1="223" y1="574.5" x2="513" y2="574.5" stroke="#1e1e1e" stroke-width="1" />
<text x="246.5" y="600" font-size="12" fill="#eeeeee" font-family="Liberation Sans" textLength="94" lengthAdjust="spacing" >Bildeigenschaften</text>
<text x="508" y="600" font-size="12" fill="#eeeeee" font-family="Liberation Sans" text-anchor="end" textLength="65" lengthAdjust="spacing" >Alt+Eingabe</text>
<circle cx="231.5" cy="595.5" r="6" fill="none" stroke="#b4b4b4" stroke-width="1.2" shape-rendering="geometricPrecision"/>
<line x1="231.5" y1="594" x2="231.5" y2="599" stroke="#6aa070" stroke-width="1.2" />
<rect x="231" y="591.5" width="1" height="1" fill="#6aa070" />
<text x="246.5" y="623" font-size="12" fill="#eeeeee" font-family="Liberation Sans" textLength="57" lengthAdjust="spacing" >Metadaten</text>
<path d="M503.5 613 L508.5 618 L503.5 623" fill="none" stroke="#eeeeee" stroke-width="1.2" shape-rendering="geometricPrecision"/>
<rect x="266.5" y="1011.5" width="46" height="25" rx="4" fill="#2d2d2d" stroke="#1c1c1c" stroke-width="1"/>
<text x="273.4" y="1027.6" font-size="10.5" fill="#e0e0e0" font-family="Liberation Sans" >px</text>
<path d="M294.5 1021 L300 1026.5 L305.5 1021" fill="none" stroke="#e8e8e8" stroke-width="1.5" shape-rendering="geometricPrecision"/>
<rect x="314" y="1011" width="29" height="25" fill="#353535" />
<rect x="316" y="1017" width="25" height="12" fill="#111111" />
<text x="316" y="1027.5" font-size="10" fill="#e8e8e8" font-family="Liberation Sans" textLength="27" lengthAdjust="spacing" >33,3 %</text>
<rect x="341" y="1015" width="2" height="16" fill="#353535" />
<rect x="343.5" y="1011.5" width="17" height="25" rx="4" fill="#2d2d2d" stroke="#1c1c1c" stroke-width="1"/>
<path d="M346.5 1021 L352 1026.5 L357.5 1021" fill="none" stroke="#e8e8e8" stroke-width="1.5" shape-rendering="geometricPrecision"/>
<path d="M367 1019 V1029 H376" fill="none" stroke="#c8c8c8" stroke-width="1.6" />
<path d="M365 1021 H375 V1031" fill="none" stroke="#c8c8c8" stroke-width="1.6" />
<rect x="366" y="1017" width="1" height="1" fill="#c8c8c8" />
<rect x="377" y="1029" width="1" height="1.5" fill="#c8c8c8" />
<text x="381" y="1028" font-size="12.5" fill="#e3e3e3" font-family="Liberation Sans" textLength="310" lengthAdjust="spacing" >Zum Zuschneiden anklicken oder die Eingabetaste drücken</text>
<rect x="1565" y="535" width="3" height="4" fill="#b4b4b4" />
<rect x="1565" y="542" width="3" height="4" fill="#b4b4b4" />
<rect x="1565" y="549" width="3" height="4" fill="#b4b4b4" />
<line x1="0" y1="1039.5" x2="1920" y2="1039.5" stroke="#555555" stroke-width="1" />
<rect x="178" y="535" width="2" height="4" fill="#b4b4b4" />
<rect x="178" y="542" width="2" height="4" fill="#b4b4b4" />
<rect x="178" y="549" width="2" height="4" fill="#b4b4b4" />
</svg>
</body></html>
